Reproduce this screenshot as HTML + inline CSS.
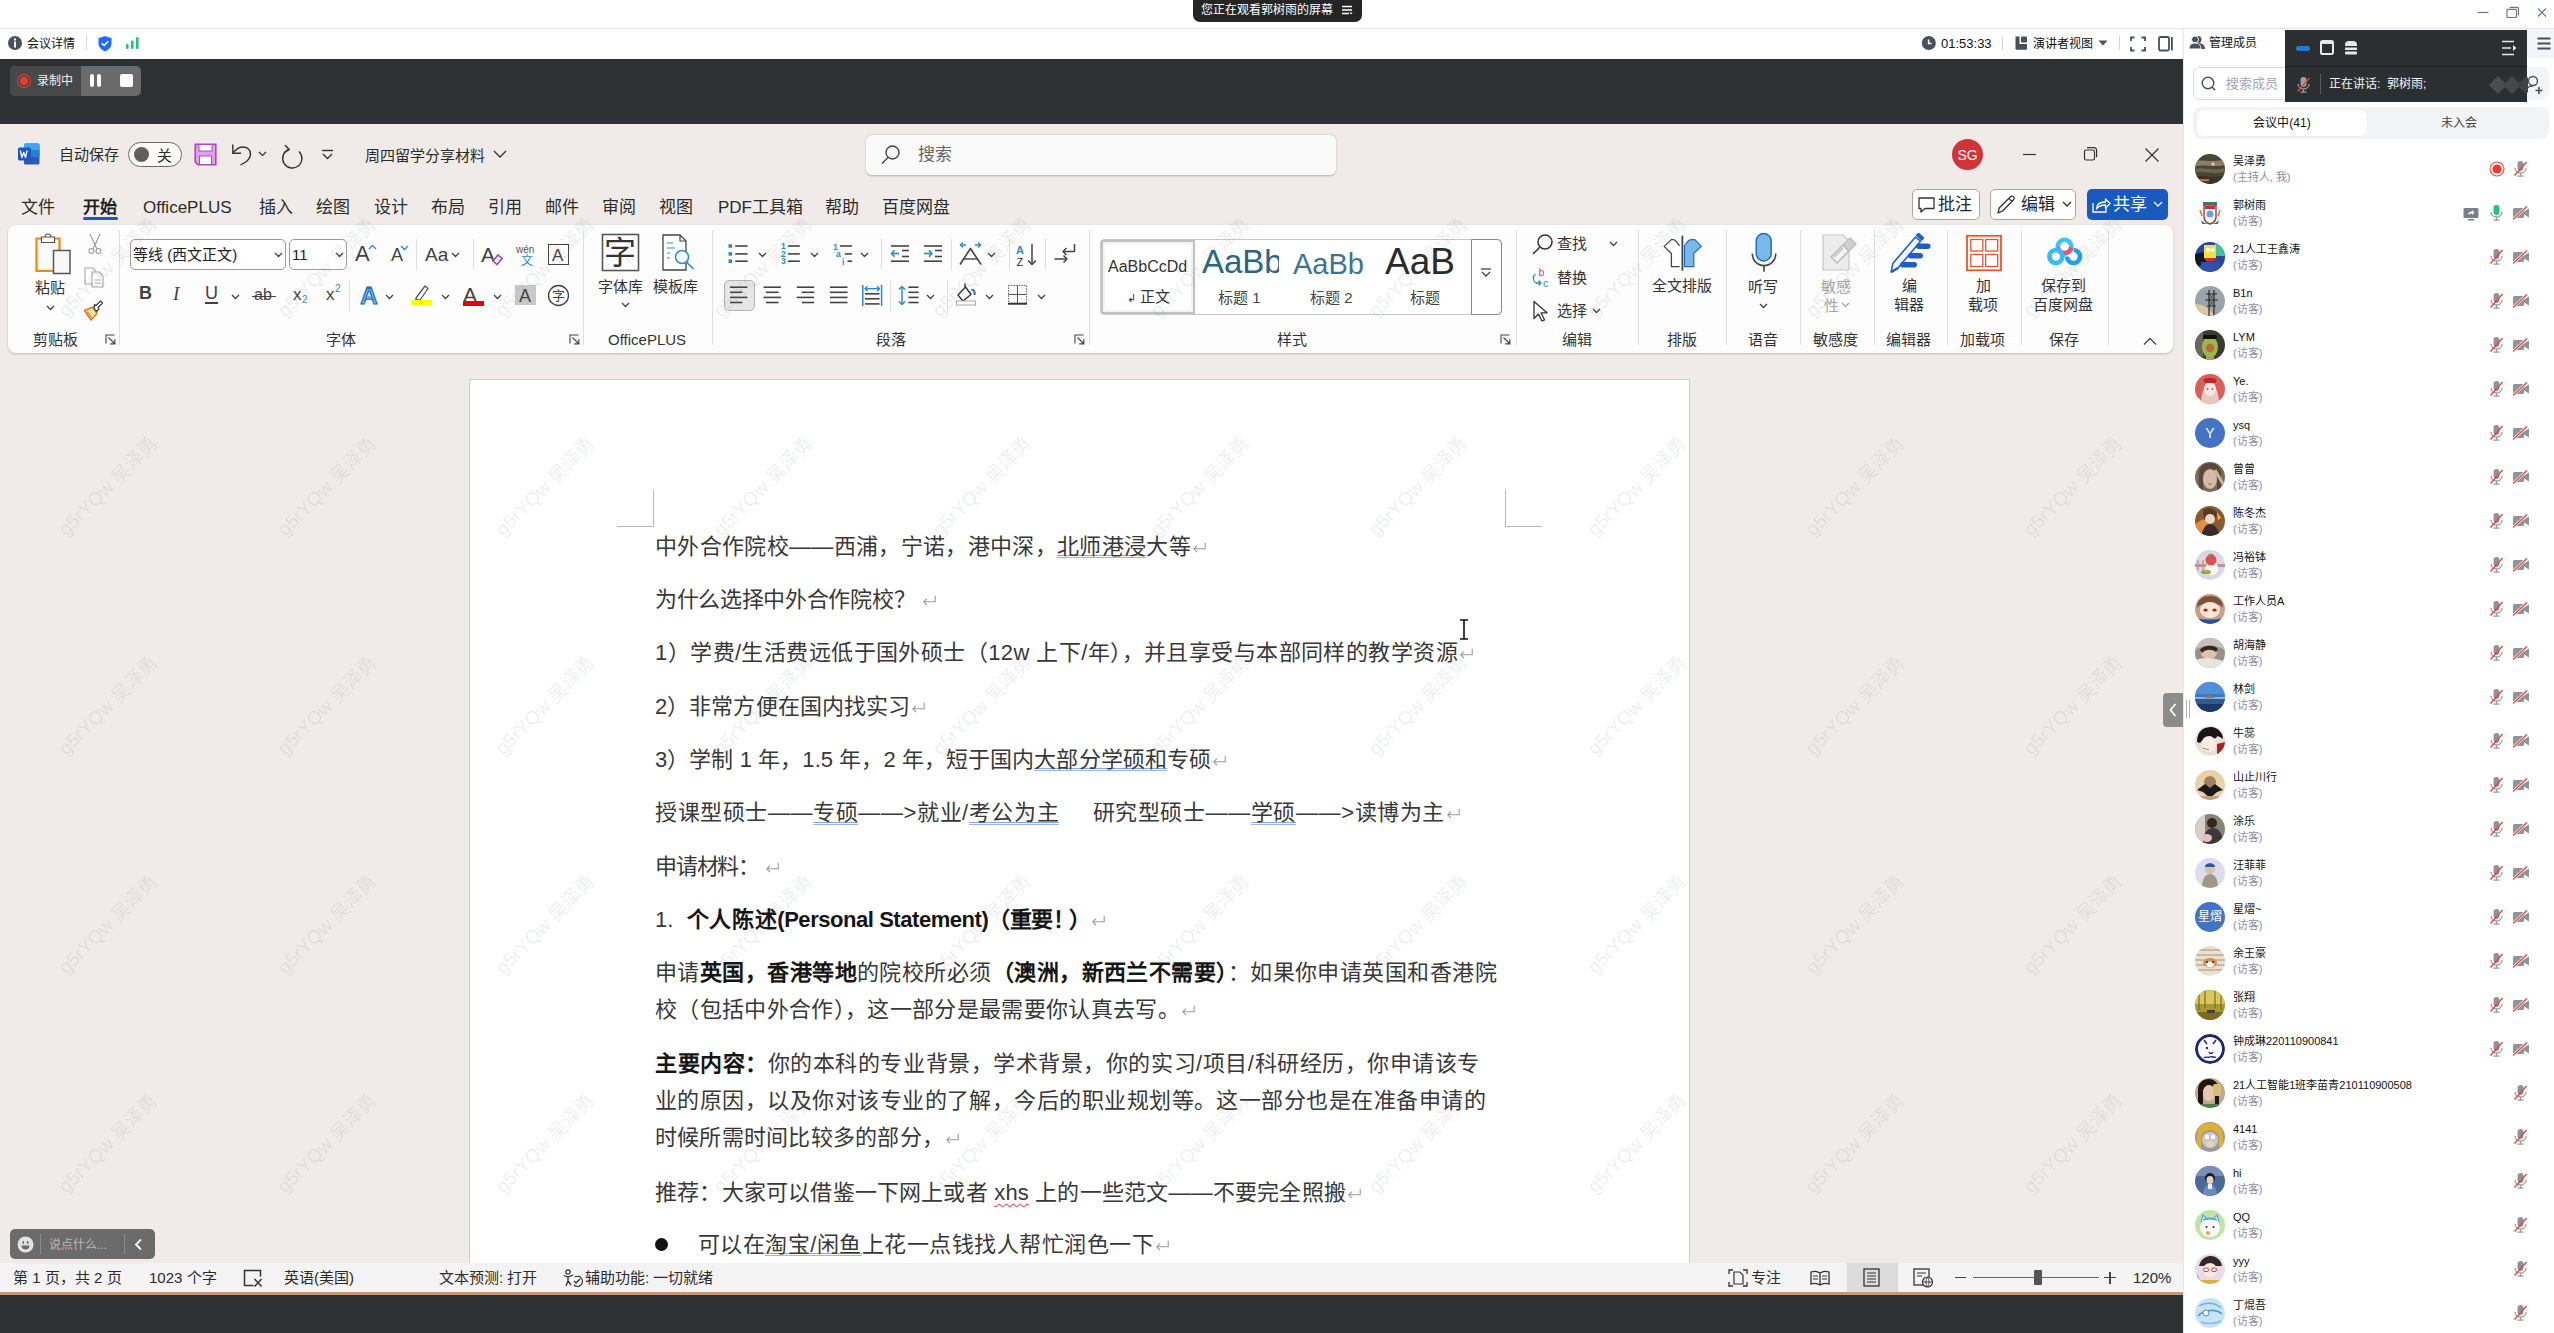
<!DOCTYPE html>
<html lang="zh-CN"><head><meta charset="utf-8">
<style>
*{box-sizing:border-box;margin:0;padding:0}
html,body{width:2554px;height:1333px;overflow:hidden;background:#fff;font-family:"Liberation Sans",sans-serif;color:#222;position:relative}
.a{position:absolute}
.t{position:absolute;white-space:nowrap;line-height:1}
svg{overflow:visible}
</style></head><body>

<div class="a" style="left:0;top:0;width:2554px;height:29px;background:#fff;border-bottom:1px solid #e4e6ee"></div>
<div class="a" style="left:0;top:59px;width:2183px;height:65px;background:#2e3134"></div>
<div class="a" style="left:0;top:124px;width:2183px;height:1168px;background:#f0ebe8"></div>
<div class="a" style="left:0;top:1292px;width:2183px;height:3px;background:#c5967a"></div>
<div class="a" style="left:0;top:1295px;width:2183px;height:38px;background:#2e3134"></div>
<div class="a" style="left:1193px;top:0;width:169px;height:22px;background:#252525;border-radius:0 0 7px 7px"></div>
<div class="t" style="left:1201px;top:4px;font-size:12px;color:#fff">您正在观看郭树雨的屏幕</div>
<svg class="a" style="left:1340px;top:3px" width="14" height="14" viewBox="0 0 14 14"><path d="M2 3.5h10M2 7h10M2 10.5h7" stroke="#fff" stroke-width="1.3"/><path d="M9.5 9.5h3l-1.5 2z" fill="#fff"/></svg>
<svg class="a" style="left:2470px;top:0" width="84" height="28" viewBox="0 0 84 28"><g stroke="#6e7385" stroke-width="1.2" fill="none"><path d="M7.5 12.5h11"/><rect x="37" y="9.3" width="9.5" height="8.2" rx="1"/><path d="M39.7 7.4h7.6a1.2 1.2 0 0 1 1.2 1.2v6.9"/><path d="M68 8.5l8 8M76 8.5l-8 8"/></g></svg>
<svg class="a" style="left:7px;top:35px" width="16" height="16" viewBox="0 0 16 16"><circle cx="8" cy="8" r="7" fill="#4a4f5c"/><rect x="7" y="6.5" width="2" height="6" fill="#fff"/><rect x="7" y="3.5" width="2" height="2" fill="#fff"/></svg>
<div class="t" style="left:27px;top:38px;font-size:12px;color:#111">会议详情</div>
<div class="a" style="left:86px;top:36px;width:1px;height:14px;background:#d6d8dd"></div>
<svg class="a" style="left:97px;top:35px" width="16" height="17" viewBox="0 0 16 17"><path d="M8 1l6.5 2.2v5.3c0 3.6-3 6.4-6.5 7.7C4.5 14.9 1.5 12.1 1.5 8.5V3.2z" fill="#1a6dff"/><path d="M4.8 8.3l2.3 2.2 4.2-4.2" stroke="#fff" stroke-width="1.6" fill="none"/></svg>
<svg class="a" style="left:125px;top:36px" width="16" height="14" viewBox="0 0 16 14"><rect x="1" y="8" width="2.6" height="5" rx="1.2" fill="#23c17c"/><rect x="6" y="4.5" width="2.6" height="8.5" rx="1.2" fill="#23c17c"/><rect x="11" y="1" width="2.6" height="12" rx="1.2" fill="#23c17c"/></svg>
<svg class="a" style="left:1921px;top:36px" width="16" height="16" viewBox="0 0 16 16"><circle cx="7.8" cy="7" r="7" fill="#4a4f5c"/><path d="M7.6 3.6v3.8h3" stroke="#fff" stroke-width="1.5" fill="none"/></svg>
<div class="t" style="left:1941px;top:37px;font-size:13px;color:#111">01:53:33</div>
<div class="a" style="left:2002px;top:36px;width:1px;height:14px;background:#d6d8dd"></div>
<svg class="a" style="left:2014px;top:36px" width="14" height="14" viewBox="0 0 14 14"><path d="M1.5 0.5h4v7.5h7.5v4.5a1.3 1.3 0 0 1-1.3 1.3H2.8a1.3 1.3 0 0 1-1.3-1.3z" fill="#4a4f5c"/><rect x="7" y="0.5" width="6" height="6" rx="1.2" fill="#4a4f5c"/></svg>
<div class="t" style="left:2033px;top:38px;font-size:12px;color:#111">演讲者视图</div>
<svg class="a" style="left:2098px;top:40px" width="10" height="6" viewBox="0 0 10 6"><path d="M0.5 0.5h9L5 5.5z" fill="#4a4f5c"/></svg>
<div class="a" style="left:2119px;top:36px;width:1px;height:14px;background:#d6d8dd"></div>
<svg class="a" style="left:2130px;top:36px" width="16" height="16" viewBox="0 0 16 16"><path d="M1 5V1.5h3.5M11.5 1.5H15V5M15 11v3.5h-3.5M4.5 14.5H1V11" stroke="#4a4f5c" stroke-width="1.8" fill="none"/></svg>
<svg class="a" style="left:2158px;top:36px" width="16" height="16" viewBox="0 0 16 16"><rect x="1" y="1" width="10" height="13.5" rx="1.5" stroke="#4a4f5c" stroke-width="1.8" fill="none"/><rect x="13" y="1" width="1.8" height="13.5" fill="#4a4f5c"/></svg>
<div class="a" style="left:10px;top:66px;width:131px;height:30px;border-radius:5px;overflow:hidden;background:#6a6a6a">
  <div class="a" style="left:0;top:0;width:71px;height:30px;background:#474848"></div>
  <svg class="a" style="left:6px;top:7px" width="16" height="16" viewBox="0 0 16 16"><circle cx="8" cy="8" r="6.6" stroke="#e23a32" stroke-width="1.1" fill="none"/><circle cx="8" cy="8" r="4.2" fill="#ea3b33"/></svg>
  <div class="t" style="left:27px;top:9px;font-size:12px;color:#f0f0f0">录制中</div>
  <div class="a" style="left:80px;top:8px;width:3.5px;height:12.5px;background:#fff;border-radius:2px"></div>
  <div class="a" style="left:87px;top:8px;width:3.5px;height:12.5px;background:#fff;border-radius:2px"></div>
  <div class="a" style="left:110px;top:8px;width:12.5px;height:12.5px;background:#fff;border-radius:2px"></div>
</div>

<svg class="a" style="left:17px;top:142px;" width="24" height="24" viewBox="0 0 24 24"><rect x="7" y="1.5" width="15.5" height="21" rx="1.5" fill="#2b5ab8"/><rect x="7" y="1.5" width="15.5" height="7" rx="1.5" fill="#41a5ee"/><rect x="7" y="8" width="15.5" height="7" fill="#2b7cd3"/><rect x="1" y="5.5" width="13" height="13" rx="1.5" fill="#185abd"/><path d="M3.3 8.5l1.6 7 1.8-5.2 1.8 5.2 1.6-7" stroke="#fff" stroke-width="1.3" fill="none" stroke-linejoin="round"/></svg>
<div class="t" style="left:59px;top:147.2px;font-size:15px;color:#2b2b2b;">自动保存</div>
<div class="a" style="left:128px;top:142px;width:54px;height:25px;border:1px solid #6b6b6b;border-radius:13px;background:#fbfaf9"></div>
<div class="a" style="left:134px;top:147px;width:15px;height:15px;border-radius:50%;background:#5f5f5f"></div>
<div class="t" style="left:157px;top:147.7px;font-size:15px;color:#2b2b2b;">关</div>
<svg class="a" style="left:194px;top:143px;" width="23" height="23" viewBox="0 0 23 23"><path d="M1.2 1.2h20.6v20.6H4.2l-3-3z" fill="#e39fe8" stroke="#b146c2" stroke-width="1.6"/><rect x="5" y="1.5" width="13" height="6.5" fill="#fff" stroke="#b146c2" stroke-width="1"/><rect x="5.5" y="13" width="12" height="8.5" fill="#fff" stroke="#b146c2" stroke-width="1"/></svg>
<svg class="a" style="left:231px;top:143px;" width="24" height="24" viewBox="0 0 24 24"><path d="M1.8 1.5v8.8h8.2" fill="none" stroke="#333" stroke-width="1.4"/><path d="M2.5 9.5C6 5 9 4 12 4c4 0 7.5 2.5 7.5 7 0 3.5-2 5.5-4 7.5L9.5 22" fill="none" stroke="#333" stroke-width="1.4"/></svg>
<svg class="a" style="left:258px;top:151px;" width="9" height="6" viewBox="0 0 9 6"><path d="M1 1l3.5 3.5L8 1" stroke="#333" stroke-width="1.2" fill="none"/></svg>
<svg class="a" style="left:279px;top:144px;" width="24" height="23" viewBox="0 0 24 23"><path d="M6 1.2l4.2 4.3-4.8 3.2" fill="none" stroke="#333" stroke-width="1.4"/><path d="M9.8 5.4A9.6 9.6 0 1 0 20 7.5" fill="none" stroke="#333" stroke-width="1.4"/></svg>
<svg class="a" style="left:321px;top:149px;" width="13" height="11" viewBox="0 0 13 11"><path d="M1 1.5h11" stroke="#333" stroke-width="1.4"/><path d="M2 5l4.5 4.5L11 5" stroke="#333" stroke-width="1.4" fill="none"/></svg>
<div class="t" style="left:365px;top:147.7px;font-size:15px;color:#2b2b2b;">周四留学分享材料</div>
<svg class="a" style="left:493px;top:150px;" width="14" height="9" viewBox="0 0 14 9"><path d="M1 1l6 6 6-6" stroke="#333" stroke-width="1.3" fill="none"/></svg>
<div class="a" style="left:866px;top:135px;width:470px;height:40px;background:#fafafa;border-radius:6px;box-shadow:0 0.6px 2px rgba(0,0,0,.25)"></div>
<svg class="a" style="left:880px;top:144px;" width="22" height="22" viewBox="0 0 22 22"><circle cx="12.5" cy="8.5" r="6.5" stroke="#444" stroke-width="1.4" fill="none"/><path d="M8 13.5l-6 6" stroke="#444" stroke-width="1.5"/></svg>
<div class="t" style="left:918px;top:146.2px;font-size:17px;color:#666;">搜索</div>
<div class="a" style="left:1952px;top:139px;width:31px;height:31px;border-radius:50%;background:#d13438"></div>
<div class="t" style="left:1952px;top:147.5px;width:31px;text-align:center;font-size:14px;color:#fff">SG</div>
<svg class="a" style="left:2016px;top:140px;" width="150" height="30" viewBox="0 0 150 30"><g stroke="#333" stroke-width="1.2" fill="none"><path d="M7 14.5h13"/><rect x="68.5" y="10" width="10" height="10" rx="1.8"/><path d="M71 7.6h7a2.6 2.6 0 0 1 2.6 2.6v7"/><path d="M129.5 8.5l13 13M142.5 8.5l-13 13"/></g></svg>
<div class="t" style="left:21px;top:198.7px;font-size:17px;color:#2b2b2b;">文件</div>
<div class="t" style="left:83px;top:198.7px;font-size:17px;color:#1f1f1f;font-weight:bold;">开始</div>
<div class="t" style="left:143px;top:198.7px;font-size:17px;color:#2b2b2b;">OfficePLUS</div>
<div class="t" style="left:259px;top:198.7px;font-size:17px;color:#2b2b2b;">插入</div>
<div class="t" style="left:316px;top:198.7px;font-size:17px;color:#2b2b2b;">绘图</div>
<div class="t" style="left:374px;top:198.7px;font-size:17px;color:#2b2b2b;">设计</div>
<div class="t" style="left:431px;top:198.7px;font-size:17px;color:#2b2b2b;">布局</div>
<div class="t" style="left:488px;top:198.7px;font-size:17px;color:#2b2b2b;">引用</div>
<div class="t" style="left:545px;top:198.7px;font-size:17px;color:#2b2b2b;">邮件</div>
<div class="t" style="left:602px;top:198.7px;font-size:17px;color:#2b2b2b;">审阅</div>
<div class="t" style="left:659px;top:198.7px;font-size:17px;color:#2b2b2b;">视图</div>
<div class="t" style="left:718px;top:198.7px;font-size:17px;color:#2b2b2b;">PDF工具箱</div>
<div class="t" style="left:825px;top:198.7px;font-size:17px;color:#2b2b2b;">帮助</div>
<div class="t" style="left:882px;top:198.7px;font-size:17px;color:#2b2b2b;">百度网盘</div>
<div class="a" style="left:83px;top:217px;width:35px;height:3px;background:#185abd;border-radius:1.5px"></div>
<div class="a" style="left:1912px;top:189px;width:68px;height:31px;background:#fff;border:1px solid #a9a6a4;border-radius:5px"></div>
<svg class="a" style="left:1917px;top:196px;" width="20" height="18" viewBox="0 0 20 18"><path d="M2 2h15v10.5H8l-4 3.5v-3.5H2z" fill="none" stroke="#333" stroke-width="1.3" stroke-linejoin="round"/></svg>
<div class="t" style="left:1938px;top:196.2px;font-size:17px;color:#262626;">批注</div>
<div class="a" style="left:1990px;top:189px;width:86px;height:31px;background:#fff;border:1px solid #a9a6a4;border-radius:5px"></div>
<svg class="a" style="left:1995px;top:194px;" width="22" height="22" viewBox="0 0 22 22"><path d="M3 19l1.2-5L15.5 2.7a2.2 2.2 0 0 1 3.1 3.1L7.3 17.2z M13.8 4.4l3 3" fill="none" stroke="#333" stroke-width="1.3" stroke-linejoin="round"/></svg>
<div class="t" style="left:2021px;top:196.2px;font-size:17px;color:#262626;">编辑</div>
<svg class="a" style="left:2062px;top:201px;" width="10" height="7" viewBox="0 0 10 7"><path d="M1 1l4 4 4-4" stroke="#333" stroke-width="1.3" fill="none"/></svg>
<div class="a" style="left:2087px;top:189px;width:81px;height:31px;background:#185abd;border-radius:5px"></div>
<svg class="a" style="left:2091px;top:196px;" width="20" height="18" viewBox="0 0 20 18"><path d="M2 7v9h13v-4" fill="none" stroke="#fff" stroke-width="1.3"/><path d="M5.5 13c0-5 3-7 9-7V3l4.5 4.5-4.5 4.5V9c-4 0-7 1-9 4z" fill="none" stroke="#fff" stroke-width="1.3" stroke-linejoin="round"/></svg>
<div class="t" style="left:2113px;top:196.2px;font-size:17px;color:#fff;">共享</div>
<svg class="a" style="left:2153px;top:201px;" width="10" height="7" viewBox="0 0 10 7"><path d="M1 1l4 4 4-4" stroke="#fff" stroke-width="1.3" fill="none"/></svg>
<div class="a" style="left:8px;top:225px;width:2165px;height:128px;background:#fdfdfd;border-radius:8px;box-shadow:0 1px 2.5px rgba(0,0,0,.22)"></div>
<div class="a" style="left:119px;top:230px;width:1px;height:115px;background:#e1dfdd"></div>
<div class="a" style="left:583px;top:230px;width:1px;height:115px;background:#e1dfdd"></div>
<div class="a" style="left:712px;top:230px;width:1px;height:115px;background:#e1dfdd"></div>
<div class="a" style="left:1089px;top:230px;width:1px;height:115px;background:#e1dfdd"></div>
<div class="a" style="left:1516px;top:230px;width:1px;height:115px;background:#e1dfdd"></div>
<div class="a" style="left:1638px;top:230px;width:1px;height:115px;background:#e1dfdd"></div>
<div class="a" style="left:1726px;top:230px;width:1px;height:115px;background:#e1dfdd"></div>
<div class="a" style="left:1800px;top:230px;width:1px;height:115px;background:#e1dfdd"></div>
<div class="a" style="left:1874px;top:230px;width:1px;height:115px;background:#e1dfdd"></div>
<div class="a" style="left:1947px;top:230px;width:1px;height:115px;background:#e1dfdd"></div>
<div class="a" style="left:2021px;top:230px;width:1px;height:115px;background:#e1dfdd"></div>
<div class="a" style="left:2108px;top:230px;width:1px;height:115px;background:#e1dfdd"></div>
<div class="t" style="left:33px;top:331.6px;font-size:15px;color:#333;">剪贴板</div>
<div class="t" style="left:326px;top:331.6px;font-size:15px;color:#333;">字体</div>
<div class="t" style="left:608px;top:331.6px;font-size:15px;color:#333;">OfficePLUS</div>
<div class="t" style="left:876px;top:331.6px;font-size:15px;color:#333;">段落</div>
<div class="t" style="left:1277px;top:331.6px;font-size:15px;color:#333;">样式</div>
<div class="t" style="left:1562px;top:331.6px;font-size:15px;color:#333;">编辑</div>
<div class="t" style="left:1667px;top:331.6px;font-size:15px;color:#333;">排版</div>
<div class="t" style="left:1748px;top:331.6px;font-size:15px;color:#333;">语音</div>
<div class="t" style="left:1813px;top:331.6px;font-size:15px;color:#333;">敏感度</div>
<div class="t" style="left:1886px;top:331.6px;font-size:15px;color:#333;">编辑器</div>
<div class="t" style="left:1960px;top:331.6px;font-size:15px;color:#333;">加载项</div>
<div class="t" style="left:2049px;top:331.6px;font-size:15px;color:#333;">保存</div>
<svg class="a" style="left:105px;top:334px;" width="11" height="11" viewBox="0 0 11 11"><path d="M1 9.5V1h8.5" stroke="#444" stroke-width="1.1" fill="none"/><path d="M3.5 3.5l6 6M9.8 5.2v4.6H5.2" stroke="#444" stroke-width="1.2" fill="none"/></svg>
<svg class="a" style="left:569px;top:334px;" width="11" height="11" viewBox="0 0 11 11"><path d="M1 9.5V1h8.5" stroke="#444" stroke-width="1.1" fill="none"/><path d="M3.5 3.5l6 6M9.8 5.2v4.6H5.2" stroke="#444" stroke-width="1.2" fill="none"/></svg>
<svg class="a" style="left:1074px;top:334px;" width="11" height="11" viewBox="0 0 11 11"><path d="M1 9.5V1h8.5" stroke="#444" stroke-width="1.1" fill="none"/><path d="M3.5 3.5l6 6M9.8 5.2v4.6H5.2" stroke="#444" stroke-width="1.2" fill="none"/></svg>
<svg class="a" style="left:1500px;top:334px;" width="11" height="11" viewBox="0 0 11 11"><path d="M1 9.5V1h8.5" stroke="#444" stroke-width="1.1" fill="none"/><path d="M3.5 3.5l6 6M9.8 5.2v4.6H5.2" stroke="#444" stroke-width="1.2" fill="none"/></svg>
<svg class="a" style="left:2143px;top:337px;" width="14" height="9" viewBox="0 0 14 9"><path d="M1 7.5l6-6 6 6" stroke="#444" stroke-width="1.3" fill="none"/></svg>
<svg class="a" style="left:33px;top:233px;" width="42" height="44" viewBox="0 0 42 44"><path d="M3.5 5.5h23v32.5h-23z" fill="#fff3d0" stroke="#e8891a" stroke-width="2.2"/><path d="M6.5 8.5h17v26.5h-17z" fill="#fbfbfb"/><path d="M8.5 4h13v5.5h-13z" fill="#fff" stroke="#555" stroke-width="1.2"/><path d="M12 4a3 3 0 0 1 6 0" fill="none" stroke="#555" stroke-width="1.2"/><rect x="20.5" y="17.5" width="16.5" height="23" fill="#f8f8f8" stroke="#555" stroke-width="1.5"/></svg>
<div class="t" style="left:34.5px;top:279.6px;font-size:15px;color:#333;">粘贴</div>
<svg class="a" style="left:46px;top:305px;" width="9" height="6" viewBox="0 0 9 6"><path d="M1 1l3.5 3.5L8 1" stroke="#424242" stroke-width="1.3" fill="none"/></svg>
<svg class="a" style="left:86px;top:233px;" width="18" height="22" viewBox="0 0 18 22"><path d="M4 1l7 15M14 1L7 16" stroke="#9a9a9a" stroke-width="1.1" fill="none"/><circle cx="5.5" cy="18" r="2.5" fill="none" stroke="#9a9a9a" stroke-width="1.1"/><circle cx="12.5" cy="18" r="2.5" fill="none" stroke="#9a9a9a" stroke-width="1.1"/></svg>
<svg class="a" style="left:83px;top:266px;" width="22" height="22" viewBox="0 0 22 22"><path d="M2 2h8l2 2v14H2z" fill="#fff" stroke="#a8a8a8" stroke-width="1.1"/><path d="M9 6h7l4 4v11H9z" fill="#fff" stroke="#a8a8a8" stroke-width="1.1"/><path d="M11.5 14h6M11.5 17h6" stroke="#a8a8a8"/></svg>
<svg class="a" style="left:83px;top:299px;" width="22" height="22" viewBox="0 0 22 22"><path d="M1.5 11.5l8.5-3.5 4 6.5-6 6.5z" fill="#ffe4a8" stroke="#e07b18" stroke-width="1.5" stroke-linejoin="round"/><path d="M4 12.5l4.5 6" stroke="#e07b18" stroke-width="1.2"/><path d="M11 9.5l2.5 3 2.5-2.5-1-1.5 4.5-4.5-2-2-4.5 4.5-1.5-1z" fill="#fff" stroke="#444" stroke-width="1.3" stroke-linejoin="round"/></svg>
<div class="a" style="left:130px;top:239px;width:156px;height:31px;border:1px solid #9c9c9c;border-radius:5px;background:#fff"></div>
<div class="t" style="left:133px;top:247.2px;font-size:15px;color:#222;">等线 (西文正文)</div>
<svg class="a" style="left:274px;top:252px;" width="9" height="6" viewBox="0 0 9 6"><path d="M1 1l3.5 3.5L8 1" stroke="#424242" stroke-width="1.3" fill="none"/></svg>
<div class="a" style="left:289px;top:239px;width:58px;height:31px;border:1px solid #9c9c9c;border-radius:5px;background:#fff"></div>
<div class="t" style="left:292px;top:247.2px;font-size:15px;color:#222;">11</div>
<svg class="a" style="left:335px;top:252px;" width="9" height="6" viewBox="0 0 9 6"><path d="M1 1l3.5 3.5L8 1" stroke="#424242" stroke-width="1.3" fill="none"/></svg>
<div class="t" style="left:355px;top:243px;font-size:22px;color:#424242;font-family:'Liberation Sans'">A</div>
<svg class="a" style="left:368px;top:244px;" width="9" height="6" viewBox="0 0 9 6"><path d="M1 5l3.5-3.5L8 5" stroke="#2a8ad4" stroke-width="1.4" fill="none"/></svg>
<div class="t" style="left:391px;top:246px;font-size:18px;color:#424242">A</div>
<svg class="a" style="left:400px;top:245px;" width="9" height="6" viewBox="0 0 9 6"><path d="M1 1l3.5 3.5L8 1" stroke="#2a8ad4" stroke-width="1.4" fill="none"/></svg>
<div class="a" style="left:416px;top:239px;width:1px;height:31px;background:#e1dfdd"></div>
<div class="t" style="left:425px;top:245px;font-size:19px;color:#424242">Aa</div>
<svg class="a" style="left:451px;top:252px;" width="9" height="6" viewBox="0 0 9 6"><path d="M1 1l3.5 3.5L8 1" stroke="#424242" stroke-width="1.3" fill="none"/></svg>
<div class="a" style="left:473px;top:239px;width:1px;height:31px;background:#e1dfdd"></div>
<div class="t" style="left:481px;top:244px;font-size:21px;color:#424242">A</div>
<svg class="a" style="left:491px;top:253px;" width="13" height="12" viewBox="0 0 13 12"><path d="M2 8l5-6 4 3.5-5 6z" fill="#fff" stroke="#a040c0" stroke-width="1.6"/></svg>
<div class="t" style="left:516px;top:245px;font-size:10px;color:#555">wén</div>
<div class="t" style="left:521px;top:255.1px;font-size:12px;color:#2a8ad4;">文</div>
<div class="a" style="left:548px;top:244px;width:21px;height:21px;border:1.6px solid #444"></div>
<div class="t" style="left:552px;top:247px;font-size:17px;color:#424242">A</div>
<div class="t" style="left:139px;top:284px;font-size:18px;font-weight:bold;color:#424242">B</div>
<div class="t" style="left:173px;top:284px;font-size:19px;font-style:italic;font-family:'Liberation Serif';color:#424242">I</div>
<div class="t" style="left:205px;top:284px;font-size:18px;color:#424242">U</div>
<div class="a" style="left:205px;top:302px;width:13px;height:1.5px;background:#424242"></div>
<svg class="a" style="left:231px;top:294px;" width="9" height="6" viewBox="0 0 9 6"><path d="M1 1l3.5 3.5L8 1" stroke="#424242" stroke-width="1.3" fill="none"/></svg>
<div class="t" style="left:254px;top:287px;font-size:16px;color:#424242">ab</div>
<div class="a" style="left:252px;top:296px;width:24px;height:1.3px;background:#424242"></div>
<div class="t" style="left:293px;top:286px;font-size:17px;color:#424242">x</div><div class="t" style="left:302px;top:295px;font-size:10px;color:#2a8ad4">2</div>
<div class="t" style="left:326px;top:286px;font-size:17px;color:#424242">x</div><div class="t" style="left:335px;top:284px;font-size:10px;color:#2a8ad4">2</div>
<div class="a" style="left:349px;top:280px;width:1px;height:31px;background:#e1dfdd"></div>
<svg class="a" style="left:357px;top:283px;" width="24" height="24" viewBox="0 0 24 24"><text x="12" y="21" text-anchor="middle" font-family="Liberation Sans" font-weight="bold" font-size="24" fill="#2b7fd0" stroke="#1a5fb0" stroke-width="1">A</text><text x="12" y="21" text-anchor="middle" font-family="Liberation Sans" font-weight="bold" font-size="24" fill="none" stroke="#bfe0ff" stroke-width="0.8" transform="translate(12 12) scale(0.78) translate(-12 -10.5)">A</text></svg>
<svg class="a" style="left:385px;top:294px;" width="9" height="6" viewBox="0 0 9 6"><path d="M1 1l3.5 3.5L8 1" stroke="#424242" stroke-width="1.3" fill="none"/></svg>
<svg class="a" style="left:410px;top:283px;" width="24" height="24" viewBox="0 0 24 24"><path d="M6 15l9-12 3 2.5-8 11.5-3 0z" fill="#fff" stroke="#555" stroke-width="1.3" stroke-linejoin="round"/><path d="M6 15l-2 3h4z" fill="#666"/><rect x="1" y="17" width="21" height="5" fill="#ffff00"/></svg>
<svg class="a" style="left:441px;top:294px;" width="9" height="6" viewBox="0 0 9 6"><path d="M1 1l3.5 3.5L8 1" stroke="#424242" stroke-width="1.3" fill="none"/></svg>
<div class="t" style="left:463px;top:284px;font-size:21px;color:#424242">A</div>
<div class="a" style="left:463px;top:301px;width:21px;height:5px;background:#e00"></div>
<svg class="a" style="left:493px;top:294px;" width="9" height="6" viewBox="0 0 9 6"><path d="M1 1l3.5 3.5L8 1" stroke="#424242" stroke-width="1.3" fill="none"/></svg>
<div class="a" style="left:515px;top:285px;width:21px;height:20px;background:#c8c8c8"></div>
<div class="t" style="left:519px;top:287px;font-size:18px;color:#424242">A</div>
<svg class="a" style="left:547px;top:284px;" width="23" height="23" viewBox="0 0 23 23"><circle cx="11.5" cy="11.5" r="10" fill="none" stroke="#444" stroke-width="1.3"/></svg>
<div class="t" style="left:552px;top:289.1px;font-size:13px;color:#444;">字</div>
<svg class="a" style="left:601px;top:233px;" width="39" height="40" viewBox="0 0 39 40"><rect x="1.5" y="1.5" width="36" height="36" fill="#fff" stroke="#555" stroke-width="1.6"/><path d="M2 2l35 35M37 2L2 37" stroke="#bbb" stroke-width="0.6" stroke-dasharray="2 2"/></svg>
<div class="t" style="left:604px;top:237px;font-size:32px;font-family:'Liberation Serif';color:#333">字</div>
<div class="t" style="left:598px;top:278.6px;font-size:15px;color:#333;">字体库</div>
<svg class="a" style="left:621px;top:302px;" width="9" height="6" viewBox="0 0 9 6"><path d="M1 1l3.5 3.5L8 1" stroke="#424242" stroke-width="1.3" fill="none"/></svg>
<svg class="a" style="left:660px;top:234px;" width="40" height="40" viewBox="0 0 40 40"><path d="M3 1h17l6 6v29H3z" fill="#fff" stroke="#444" stroke-width="1.3"/><path d="M20 1v6h6" fill="none" stroke="#444" stroke-width="1.2"/><path d="M7 9h6M7 14h8M7 19h3M7 24h3" stroke="#2a8ad4" stroke-width="1.2"/><circle cx="22" cy="23" r="6.5" fill="#fff" stroke="#2a8ad4" stroke-width="1.5"/><path d="M26.5 28l7 7" stroke="#2a8ad4" stroke-width="1.6"/></svg>
<div class="t" style="left:653px;top:278.6px;font-size:15px;color:#333;">模板库</div>
<svg class="a" style="left:715px;top:235px;" width="375" height="80" viewBox="0 0 375 80"><rect x="13.5" y="9.199999999999989" width="3.6" height="3.6" fill="#2a8ad4"/><path d="M20.200000000000045 11L32.60000000000002 11" stroke="#444" stroke-width="1.6" fill="none"/><rect x="13.5" y="17.099999999999994" width="3.6" height="3.6" fill="#2a8ad4"/><path d="M20.200000000000045 18.900000000000006L32.60000000000002 18.900000000000006" stroke="#444" stroke-width="1.6" fill="none"/><rect x="13.5" y="24.399999999999977" width="3.6" height="3.6" fill="#2a8ad4"/><path d="M20.200000000000045 26.19999999999999L32.60000000000002 26.19999999999999" stroke="#444" stroke-width="1.6" fill="none"/><text x="66" y="14.199999999999989" font-size="8.5" font-weight="bold" fill="#2a8ad4" font-family="Liberation Sans">1</text><path d="M73 11L84.79999999999995 11" stroke="#444" stroke-width="1.6" fill="none"/><text x="66" y="22.100000000000023" font-size="8.5" font-weight="bold" fill="#2a8ad4" font-family="Liberation Sans">2</text><path d="M73 18.900000000000006L84.79999999999995 18.900000000000006" stroke="#444" stroke-width="1.6" fill="none"/><text x="66" y="29.399999999999977" font-size="8.5" font-weight="bold" fill="#2a8ad4" font-family="Liberation Sans">3</text><path d="M73 26.19999999999999L84.79999999999995 26.19999999999999" stroke="#444" stroke-width="1.6" fill="none"/><text x="118" y="14.5" font-size="8.5" font-weight="bold" fill="#2a8ad4" font-family="Liberation Sans">1</text><text x="121" y="22" font-size="8.5" font-weight="bold" fill="#2a8ad4" font-family="Liberation Sans">a</text><text x="127" y="29.5" font-size="8.5" font-weight="bold" fill="#2a8ad4" font-family="Liberation Sans">i</text><path d="M125 11L137 11" stroke="#444" stroke-width="1.6" fill="none"/><path d="M130 18.900000000000006L137 18.900000000000006" stroke="#444" stroke-width="1.6" fill="none"/><path d="M132.5 26.19999999999999L137 26.19999999999999" stroke="#444" stroke-width="1.6" fill="none"/><path d="M176 11L194 11" stroke="#444" stroke-width="1.6" fill="none"/><path d="M176 26.19999999999999L194 26.19999999999999" stroke="#444" stroke-width="1.6" fill="none"/><path d="M187 15.5L194 15.5" stroke="#444" stroke-width="1.6" fill="none"/><path d="M187 21.5L194 21.5" stroke="#444" stroke-width="1.6" fill="none"/><path d="M176.5 18.5L184 18.5" stroke="#2a8ad4" stroke-width="1.7" fill="none"/><path d="M179.5 15.300000000000011L176.60000000000002 18.5L179.5 21.69999999999999" stroke="#2a8ad4" stroke-width="1.7" fill="none" stroke-linejoin="round"/><path d="M209 11L227 11" stroke="#444" stroke-width="1.6" fill="none"/><path d="M209 26.19999999999999L227 26.19999999999999" stroke="#444" stroke-width="1.6" fill="none"/><path d="M220 15.5L227 15.5" stroke="#444" stroke-width="1.6" fill="none"/><path d="M220 21.5L227 21.5" stroke="#444" stroke-width="1.6" fill="none"/><path d="M209 18.5L217 18.5" stroke="#2a8ad4" stroke-width="1.7" fill="none"/><path d="M214 15.300000000000011L216.89999999999998 18.5L214 21.69999999999999" stroke="#2a8ad4" stroke-width="1.7" fill="none" stroke-linejoin="round"/><path d="M245 29.5L255.5 13.5L266 29.5" stroke="#444" stroke-width="1.6" fill="none" stroke-linejoin="round"/><path d="M249 24L262 24" stroke="#444" stroke-width="1.4" fill="none"/><path d="M245.5 10L251 10" stroke="#2a8ad4" stroke-width="1.5" fill="none"/><path d="M248 7.5L245.5 10L248 12.5" stroke="#2a8ad4" stroke-width="1.5" fill="none" stroke-linejoin="round"/><path d="M260 10L265.5 10" stroke="#2a8ad4" stroke-width="1.5" fill="none"/><path d="M263 7.5L265.5 10L263 12.5" stroke="#2a8ad4" stroke-width="1.5" fill="none" stroke-linejoin="round"/><text x="301" y="18.5" font-size="11" font-weight="bold" fill="#2a8ad4" font-family="Liberation Sans">A</text><text x="301.5" y="30.5" font-size="11" fill="#333" font-family="Liberation Sans">Z</text><path d="M317 9L317 29.5" stroke="#444" stroke-width="1.5" fill="none"/><path d="M313 25.5L317 29.5L321 25.5" stroke="#444" stroke-width="1.5" fill="none" stroke-linejoin="round"/><path d="M359.5 9V16.5H348" stroke="#444" stroke-width="1.5" fill="none" stroke-linejoin="round"/><path d="M351.5 13L348 16.5L351.5 20" stroke="#444" stroke-width="1.5" fill="none" stroke-linejoin="round"/><path d="M339.5 24L352 24" stroke="#444" stroke-width="1.5" fill="none"/><path d="M348.5 20.5L352 24L348.5 27.5" stroke="#444" stroke-width="1.5" fill="none" stroke-linejoin="round"/><path d="M15 52.19999999999999L32.39999999999998 52.19999999999999" stroke="#444" stroke-width="1.6" fill="none"/><path d="M15 57.30000000000001L27.299999999999955 57.30000000000001" stroke="#444" stroke-width="1.6" fill="none"/><path d="M15 62.39999999999998L32.39999999999998 62.39999999999998" stroke="#444" stroke-width="1.6" fill="none"/><path d="M15 67.5L27.299999999999955 67.5" stroke="#444" stroke-width="1.6" fill="none"/><path d="M48.5 52.19999999999999L65.89999999999998 52.19999999999999" stroke="#444" stroke-width="1.6" fill="none"/><path d="M51 57.30000000000001L63.5 57.30000000000001" stroke="#444" stroke-width="1.6" fill="none"/><path d="M48.5 62.39999999999998L65.89999999999998 62.39999999999998" stroke="#444" stroke-width="1.6" fill="none"/><path d="M51 67.5L63.5 67.5" stroke="#444" stroke-width="1.6" fill="none"/><path d="M81.79999999999995 52.19999999999999L99.20000000000005 52.19999999999999" stroke="#444" stroke-width="1.6" fill="none"/><path d="M86.79999999999995 57.30000000000001L99.20000000000005 57.30000000000001" stroke="#444" stroke-width="1.6" fill="none"/><path d="M81.79999999999995 62.39999999999998L99.20000000000005 62.39999999999998" stroke="#444" stroke-width="1.6" fill="none"/><path d="M86.79999999999995 67.5L99.20000000000005 67.5" stroke="#444" stroke-width="1.6" fill="none"/><path d="M115 52.19999999999999L132.5 52.19999999999999" stroke="#444" stroke-width="1.6" fill="none"/><path d="M115 57.30000000000001L132.5 57.30000000000001" stroke="#444" stroke-width="1.6" fill="none"/><path d="M115 62.39999999999998L132.5 62.39999999999998" stroke="#444" stroke-width="1.6" fill="none"/><path d="M115 67.5L132.5 67.5" stroke="#444" stroke-width="1.6" fill="none"/><path d="M147.79999999999995 50L147.79999999999995 71" stroke="#2a8ad4" stroke-width="1.5" fill="none"/><path d="M166.60000000000002 50L166.60000000000002 71" stroke="#2a8ad4" stroke-width="1.5" fill="none"/><path d="M150 53.69999999999999L164.5 53.69999999999999" stroke="#2a8ad4" stroke-width="1.4" fill="none"/><path d="M152.5 51.19999999999999L150 53.69999999999999L152.5 56.19999999999999M162 51.19999999999999L164.5 53.69999999999999L162 56.19999999999999" stroke="#2a8ad4" stroke-width="1.4" fill="none" stroke-linejoin="round"/><path d="M150 58.80000000000001L164.5 58.80000000000001" stroke="#444" stroke-width="1.6" fill="none"/><path d="M150 63.80000000000001L164.5 63.80000000000001" stroke="#444" stroke-width="1.6" fill="none"/><path d="M150 68.89999999999998L164.5 68.89999999999998" stroke="#444" stroke-width="1.6" fill="none"/><path d="M187 51.5L187 69.5" stroke="#2a8ad4" stroke-width="1.5" fill="none"/><path d="M184 54.5L187 51.5L190 54.5M184 66.5L187 69.5L190 66.5" stroke="#2a8ad4" stroke-width="1.5" fill="none" stroke-linejoin="round"/><path d="M193.39999999999998 52.19999999999999L203.60000000000002 52.19999999999999" stroke="#444" stroke-width="1.6" fill="none"/><path d="M193.39999999999998 57.30000000000001L203.60000000000002 57.30000000000001" stroke="#444" stroke-width="1.6" fill="none"/><path d="M193.39999999999998 62.39999999999998L203.60000000000002 62.39999999999998" stroke="#444" stroke-width="1.6" fill="none"/><path d="M193.39999999999998 67.5L203.60000000000002 67.5" stroke="#444" stroke-width="1.6" fill="none"/><path d="M243 60L250.5 52L256 59.5L248 66Z" stroke="#333" stroke-width="1.4" fill="#fff" stroke-linejoin="round"/><path d="M250 52.5V48.5" stroke="#333" stroke-width="1.4" fill="none" stroke-linejoin="round"/><path d="M256.5 55C259 54 260 57 259.5 60" stroke="#2a6fb8" stroke-width="2" fill="none" stroke-linejoin="round"/><rect x="241.5" y="66" width="19" height="4" fill="#fff" stroke="#aaa" stroke-width="1"/><rect x="293.5" y="50.5" width="18" height="17.5" fill="none" stroke="#555" stroke-width="1" stroke-dasharray="1.3 1.3"/><path d="M302.5 50.5L302.5 68" stroke="#555" stroke-width="1" fill="none"/><path d="M293.5 59.5L311.5 59.5" stroke="#555" stroke-width="1" fill="none"/><path d="M293 68.80000000000001L312 68.80000000000001" stroke="#333" stroke-width="1.8" fill="none"/></svg>
<svg class="a" style="left:758px;top:252px;" width="9" height="6" viewBox="0 0 9 6"><path d="M1 1l3.5 3.5L8 1" stroke="#424242" stroke-width="1.3" fill="none"/></svg>
<svg class="a" style="left:810px;top:252px;" width="9" height="6" viewBox="0 0 9 6"><path d="M1 1l3.5 3.5L8 1" stroke="#424242" stroke-width="1.3" fill="none"/></svg>
<svg class="a" style="left:860px;top:252px;" width="9" height="6" viewBox="0 0 9 6"><path d="M1 1l3.5 3.5L8 1" stroke="#424242" stroke-width="1.3" fill="none"/></svg>
<svg class="a" style="left:987px;top:252px;" width="9" height="6" viewBox="0 0 9 6"><path d="M1 1l3.5 3.5L8 1" stroke="#424242" stroke-width="1.3" fill="none"/></svg>
<svg class="a" style="left:926px;top:294px;" width="9" height="6" viewBox="0 0 9 6"><path d="M1 1l3.5 3.5L8 1" stroke="#424242" stroke-width="1.3" fill="none"/></svg>
<svg class="a" style="left:985px;top:294px;" width="9" height="6" viewBox="0 0 9 6"><path d="M1 1l3.5 3.5L8 1" stroke="#424242" stroke-width="1.3" fill="none"/></svg>
<svg class="a" style="left:1037px;top:294px;" width="9" height="6" viewBox="0 0 9 6"><path d="M1 1l3.5 3.5L8 1" stroke="#424242" stroke-width="1.3" fill="none"/></svg>
<div class="a" style="left:881px;top:239px;width:1px;height:31px;background:#e1dfdd"></div>
<div class="a" style="left:951px;top:239px;width:1px;height:31px;background:#e1dfdd"></div>
<div class="a" style="left:1009px;top:239px;width:1px;height:31px;background:#e1dfdd"></div>
<div class="a" style="left:1045px;top:239px;width:1px;height:31px;background:#e1dfdd"></div>
<div class="a" style="left:890px;top:280px;width:1px;height:31px;background:#e1dfdd"></div>
<div class="a" style="left:947px;top:280px;width:1px;height:31px;background:#e1dfdd"></div>
<div class="a" style="left:724px;top:280px;width:31px;height:31px;background:#e6e6e6;border:1px solid #b3b3b3;border-radius:5px"></div>
<svg class="a" style="left:715px;top:235px;" width="375" height="80" viewBox="0 0 375 80"><path d="M15 52.19999999999999L32.39999999999998 52.19999999999999" stroke="#444" stroke-width="1.6" fill="none"/><path d="M15 57.30000000000001L27.299999999999955 57.30000000000001" stroke="#444" stroke-width="1.6" fill="none"/><path d="M15 62.39999999999998L32.39999999999998 62.39999999999998" stroke="#444" stroke-width="1.6" fill="none"/><path d="M15 67.5L27.299999999999955 67.5" stroke="#444" stroke-width="1.6" fill="none"/></svg>
<div class="a" style="left:1100px;top:239px;width:402px;height:76px;border:1px solid #c8c8c8;border-radius:4px;background:#fff"></div>
<div class="a" style="left:1101px;top:240px;width:94px;height:74px;border:2px solid #c2c2c2;background:#fff;box-shadow:inset 0 0 0 2px #f3f3f3"></div>
<div class="t" style="left:1108px;top:259px;font-size:16px;color:#333;width:80px;overflow:hidden">AaBbCcDd</div>
<div class="t" style="left:1127px;top:289.1px;font-size:15px;color:#333;"><span style="font-size:11px">↲</span> 正文</div>
<div class="t" style="left:1202px;top:245px;font-size:33px;color:#2a6585;width:77px;overflow:hidden">AaBbC</div>
<div class="t" style="left:1218px;top:289.6px;font-size:15px;color:#444;">标题 1</div>
<div class="t" style="left:1293px;top:250px;font-size:29px;color:#3a7595;width:77px;overflow:hidden">AaBb</div>
<div class="t" style="left:1310px;top:289.6px;font-size:15px;color:#444;">标题 2</div>
<div class="t" style="left:1385px;top:243px;font-size:37px;color:#2a2a2a;width:80px;overflow:hidden">AaB</div>
<div class="t" style="left:1410px;top:289.6px;font-size:15px;color:#444;">标题</div>
<div class="a" style="left:1471px;top:239px;width:31px;height:76px;border:1px solid #8a8a8a;background:#fff;border-radius:0 5px 5px 0"></div>
<svg class="a" style="left:1480px;top:268px;" width="12" height="10" viewBox="0 0 12 10"><path d="M1 1h10" stroke="#444" stroke-width="1.3"/><path d="M2 4l4 4 4-4" stroke="#444" stroke-width="1.3" fill="none"/></svg>
<svg class="a" style="left:1531px;top:233px;" width="24" height="23" viewBox="0 0 24 23"><circle cx="14" cy="9" r="7" fill="none" stroke="#333" stroke-width="1.5"/><path d="M9 14l-7 7" stroke="#333" stroke-width="1.6"/></svg>
<div class="t" style="left:1557px;top:236.2px;font-size:15px;color:#333;">查找</div>
<svg class="a" style="left:1609px;top:241px;" width="9" height="6" viewBox="0 0 9 6"><path d="M1 1l3.5 3.5L8 1" stroke="#424242" stroke-width="1.3" fill="none"/></svg>
<svg class="a" style="left:1530px;top:266px;" width="22" height="24" viewBox="0 0 22 24"><text x="8.5" y="9.5" font-size="10.5" fill="#b040c8" font-family="Liberation Sans">b</text><text x="13" y="20.5" font-size="10.5" fill="#2a8ad4" font-family="Liberation Sans">c</text><path d="M5.5 8C2.5 10 2.5 15 6 17h5M8.5 14.5L11 17l-2.5 2.5" stroke="#2a8ad4" stroke-width="1.3" fill="none"/></svg>
<div class="t" style="left:1557px;top:269.6px;font-size:15px;color:#333;">替换</div>
<svg class="a" style="left:1532px;top:300px;" width="18" height="22" viewBox="0 0 18 22"><path d="M2 1.5v17l4.5-4.5 3.5 7 2.5-1.2-3.5-7H15z" fill="#fff" stroke="#333" stroke-width="1.3" stroke-linejoin="round"/></svg>
<div class="t" style="left:1557px;top:303.1px;font-size:15px;color:#333;">选择</div>
<svg class="a" style="left:1592px;top:308px;" width="9" height="6" viewBox="0 0 9 6"><path d="M1 1l3.5 3.5L8 1" stroke="#424242" stroke-width="1.3" fill="none"/></svg>
<svg class="a" style="left:1660px;top:233px;" width="44" height="40" viewBox="0 0 44 40"><path d="M19.6 12.7C18 11 16 7 13.5 6.6h-2.1L4.2 13.4l7.2 7.1v13.2h8.2" fill="#fff" stroke="#444" stroke-width="1.3" stroke-linejoin="round"/><path d="M24.5 12.7C26 11 28 7 30.6 6.6h4.3l6.4 6.8-7.5 6.8v13.5h-9.3z" fill="#7ab8ea" stroke="#1e6fc0" stroke-width="1.2" stroke-linejoin="round"/><path d="M22.4 2.7v35" stroke="#444" stroke-width="1.8"/></svg>
<div class="t" style="left:1652px;top:277.6px;font-size:15px;color:#333;">全文排版</div>
<svg class="a" style="left:1750px;top:232px;" width="28" height="42" viewBox="0 0 28 42"><rect x="6.2" y="1.6" width="15" height="27.4" rx="7.5" fill="#7ab8ea" stroke="#1e6fc0" stroke-width="1.5"/><path d="M2.3 21.5c0 7 5 12 11.75 12s11.75-5 11.75-12" stroke="#444" stroke-width="1.5" fill="none"/><path d="M14 33.6v6.2" stroke="#444" stroke-width="1.6"/></svg>
<div class="t" style="left:1748px;top:278.6px;font-size:15px;color:#333;">听写</div>
<svg class="a" style="left:1759px;top:303px;" width="9" height="6" viewBox="0 0 9 6"><path d="M1 1l3.5 3.5L8 1" stroke="#424242" stroke-width="1.3" fill="none"/></svg>
<svg class="a" style="left:1821px;top:232px;" width="40" height="42" viewBox="0 0 40 42"><path d="M2 3h20l6 6v29H2z" fill="#ececec" stroke="#c6c6c6" stroke-width="1.2"/><path d="M10 25l12-12 6 6-12 12z" fill="#f4f4f4" stroke="#bdbdbd" stroke-width="1.6" stroke-linejoin="round"/><path d="M13 25l9-9" stroke="#c8c8c8" stroke-width="2"/><path d="M22 13l7-7 6 6-7 7z" fill="#d0d0d0" stroke="#bdbdbd" stroke-width="1.4" stroke-linejoin="round"/></svg>
<div class="t" style="left:1821px;top:278.6px;font-size:15px;color:#a6a6a6;">敏感</div>
<div class="t" style="left:1824px;top:297.6px;font-size:15px;color:#a6a6a6;">性</div>
<svg class="a" style="left:1841px;top:302px;" width="9" height="6" viewBox="0 0 9 6"><path d="M1 1l3.5 3.5L8 1" stroke="#a6a6a6" stroke-width="1.3" fill="none"/></svg>
<svg class="a" style="left:1889px;top:232px;" width="44" height="44" viewBox="0 0 44 44"><path d="M2.2 40l1.6-8.5L26.5 5l5 4.2L9 36z" fill="#f4f6fb" stroke="#1f5fc8" stroke-width="1.6" stroke-linejoin="round"/><path d="M27.5 3.2l2.2-1.6 4.8 4.2-1.6 2.2z" fill="#1f5fc8" stroke="#1f5fc8" stroke-width="1.5" stroke-linejoin="round"/><path d="M2.2 40l7-4" stroke="#1f5fc8" stroke-width="2.2"/><rect x="27" y="11.5" width="14.5" height="5.4" rx="2.7" fill="#1f5fc8"/><rect x="19" y="21" width="15" height="5.4" rx="2.7" fill="#1f5fc8"/><rect x="11" y="30" width="17" height="5.6" rx="2.8" fill="#1f5fc8"/></svg>
<div class="t" style="left:1902px;top:277.6px;font-size:15px;color:#333;">编</div>
<div class="t" style="left:1894px;top:296.6px;font-size:15px;color:#333;">辑器</div>
<svg class="a" style="left:1965px;top:234px;" width="38" height="38" viewBox="0 0 38 38"><rect x="2" y="1.8" width="34" height="34.5" fill="#fff" stroke="#e8572b" stroke-width="1.8"/><rect x="5.8" y="5.5" width="12" height="11.5" fill="none" stroke="#e8572b" stroke-width="1.3"/><rect x="20.7" y="5.5" width="12" height="11.5" fill="none" stroke="#e8572b" stroke-width="1.3"/><rect x="5.8" y="20.5" width="12" height="12" fill="none" stroke="#e8572b" stroke-width="1.3"/><rect x="20.7" y="20.5" width="12" height="12" fill="none" stroke="#e8572b" stroke-width="1.3"/></svg>
<div class="t" style="left:1976px;top:277.6px;font-size:15px;color:#333;">加</div>
<div class="t" style="left:1968px;top:296.6px;font-size:15px;color:#333;">载项</div>
<svg class="a" style="left:2045px;top:235px;" width="38" height="32" viewBox="0 0 38 32"><circle cx="19.5" cy="11.6" r="6.8" fill="none" stroke="#3fc4f0" stroke-width="4.6"/><path d="M12.8 12.5a6.8 6.8 0 0 0 13.4 0" fill="none" stroke="#ef5070" stroke-width="4.6"/><circle cx="10.9" cy="21.5" r="6.5" fill="none" stroke="#35bdf0" stroke-width="4.6"/><path d="M22 21.5a6.5 6.5 0 1 0 6.5-6.5" fill="none" stroke="#1fa0f0" stroke-width="4.6"/></svg>
<div class="t" style="left:2041px;top:277.6px;font-size:15px;color:#333;">保存到</div>
<div class="t" style="left:2033px;top:296.6px;font-size:15px;color:#333;">百度网盘</div>
<div class="a" style="left:469px;top:379px;width:1221px;height:890px;background:#fff;border:1px solid #cfcccb;border-bottom:none"></div>
<div class="a" style="left:653px;top:490px;width:1px;height:37px;background:#b9b9b9"></div>
<div class="a" style="left:617px;top:526px;width:37px;height:1px;background:#b9b9b9"></div>
<div class="a" style="left:1505px;top:490px;width:1px;height:37px;background:#b9b9b9"></div>
<div class="a" style="left:1505px;top:526px;width:37px;height:1px;background:#b9b9b9"></div>
<style>.dl{position:absolute;white-space:nowrap;line-height:1;font-size:22px;color:#383838}.pmk{vertical-align:0px;margin-left:1px}.dl b{color:#151515}.pm{color:#a6a6a6;font-size:19px;margin-left:0px}.ul{background-image:linear-gradient(#86a8dc,#86a8dc),linear-gradient(#9ab8e4,#9ab8e4);background-size:100% 1px,100% 1px;background-position:0 21.3px,0 23.3px;background-repeat:no-repeat}.sq{text-decoration:underline wavy #e0201c 1px;text-underline-offset:3px}</style>
<div class="dl" id="dl0" data-end="1207" style="left:655px;top:535.8px;letter-spacing:0.333px">中外合作院校——西浦，宁诺，港中深，<span class="ul">北师港浸</span>大等<svg class="pmk" width="15" height="12" viewBox="0 0 15 12"><path d="M13.2 0.8v6H1.8M5 3.6L1.8 6.8 5 10" stroke="#9c9c9c" stroke-width="1.1" fill="none"/></svg></div>
<div class="dl" id="dl1" data-end="937" style="left:655px;top:588.8px;letter-spacing:-0.317px">为什么选择中外合作院校？ <svg class="pmk" width="15" height="12" viewBox="0 0 15 12"><path d="M13.2 0.8v6H1.8M5 3.6L1.8 6.8 5 10" stroke="#9c9c9c" stroke-width="1.1" fill="none"/></svg></div>
<div class="dl" id="dl2" data-end="1474" style="left:655px;top:642.3px;letter-spacing:0.427px">1）学费/生活费远低于国外硕士（12w 上下/年），并且享受与本部同样的教学资源<svg class="pmk" width="15" height="12" viewBox="0 0 15 12"><path d="M13.2 0.8v6H1.8M5 3.6L1.8 6.8 5 10" stroke="#9c9c9c" stroke-width="1.1" fill="none"/></svg></div>
<div class="dl" id="dl3" data-end="926" style="left:655px;top:695.8px;letter-spacing:0.063px">2）非常方便在国内找实习<svg class="pmk" width="15" height="12" viewBox="0 0 15 12"><path d="M13.2 0.8v6H1.8M5 3.6L1.8 6.8 5 10" stroke="#9c9c9c" stroke-width="1.1" fill="none"/></svg></div>
<div class="dl" id="dl4" data-end="1227" style="left:655px;top:748.8px;letter-spacing:0.072px">3）学制 1 年，1.5 年，2 年，短于国内<span class="ul">大部分学硕和</span>专硕<svg class="pmk" width="15" height="12" viewBox="0 0 15 12"><path d="M13.2 0.8v6H1.8M5 3.6L1.8 6.8 5 10" stroke="#9c9c9c" stroke-width="1.1" fill="none"/></svg></div>
<div class="dl" id="dl5" data-end="1461" style="left:655px;top:802.3px;letter-spacing:0.589px">授课型硕士——<span class="ul">专硕</span>——>就业/<span class="ul">考公为主</span>&nbsp;&nbsp;&nbsp;&nbsp; 研究型硕士——<span class="ul">学硕</span>——>读博为主<svg class="pmk" width="15" height="12" viewBox="0 0 15 12"><path d="M13.2 0.8v6H1.8M5 3.6L1.8 6.8 5 10" stroke="#9c9c9c" stroke-width="1.1" fill="none"/></svg></div>
<div class="dl" id="dl6" data-end="780" style="left:655px;top:855.8px;letter-spacing:-1.187px">申请材料： <svg class="pmk" width="15" height="12" viewBox="0 0 15 12"><path d="M13.2 0.8v6H1.8M5 3.6L1.8 6.8 5 10" stroke="#9c9c9c" stroke-width="1.1" fill="none"/></svg></div>
<div class="dl" id="dl7" data-end="0" style="left:655px;top:908.8px;letter-spacing:0.000px">1.<span style="margin-left:13.5px"></span><b><span style="letter-spacing:0.6px">个人陈述</span><span style="letter-spacing:-0.45px">(Personal Statement)</span><span style="letter-spacing:-0.5px">（重要<span style="letter-spacing:-6px">！</span>）</span></b><svg class="pmk" width="15" height="12" viewBox="0 0 15 12"><path d="M13.2 0.8v6H1.8M5 3.6L1.8 6.8 5 10" stroke="#9c9c9c" stroke-width="1.1" fill="none"/></svg></div>
<div class="dl" id="dl8" data-end="1497" style="left:655px;top:962.3px;letter-spacing:0.446px">申请<b>英国，香港等地</b>的院校所必须<b>（澳洲，新西兰不需要）</b>：如果你申请英国和香港院</div>
<div class="dl" id="dl9" data-end="1196" style="left:655px;top:999.3px;letter-spacing:0.333px">校（包括中外合作），这一部分是最需要你认真去写。<svg class="pmk" width="15" height="12" viewBox="0 0 15 12"><path d="M13.2 0.8v6H1.8M5 3.6L1.8 6.8 5 10" stroke="#9c9c9c" stroke-width="1.1" fill="none"/></svg></div>
<div class="dl" id="dl10" data-end="1480" style="left:655px;top:1053.3px;letter-spacing:0.546px"><b>主要内容：</b>你的本科的专业背景，学术背景，你的实习/项目/科研经历，你申请该专</div>
<div class="dl" id="dl11" data-end="1486" style="left:655px;top:1090.3px;letter-spacing:0.459px">业的原因，以及你对该专业的了解，今后的职业规划等。这一部分也是在准备申请的</div>
<div class="dl" id="dl12" data-end="960" style="left:655px;top:1127.3px;letter-spacing:0.230px">时候所需时间比较多的部分，<svg class="pmk" width="15" height="12" viewBox="0 0 15 12"><path d="M13.2 0.8v6H1.8M5 3.6L1.8 6.8 5 10" stroke="#9c9c9c" stroke-width="1.1" fill="none"/></svg></div>
<div class="dl" id="dl13" data-end="1362" style="left:655px;top:1181.8px;letter-spacing:0.192px">推荐：大家可以借鉴一下网上或者 <span class="sq">xhs</span> 上的一些范文——不要完全照搬<svg class="pmk" width="15" height="12" viewBox="0 0 15 12"><path d="M13.2 0.8v6H1.8M5 3.6L1.8 6.8 5 10" stroke="#9c9c9c" stroke-width="1.1" fill="none"/></svg></div>
<div class="dl" id="dl14" data-end="1170" style="left:698px;top:1233.8px;letter-spacing:0.469px">可以在<span class="ul">淘宝/闲鱼</span>上花一点钱找人帮忙润色一下<svg class="pmk" width="15" height="12" viewBox="0 0 15 12"><path d="M13.2 0.8v6H1.8M5 3.6L1.8 6.8 5 10" stroke="#9c9c9c" stroke-width="1.1" fill="none"/></svg></div>
<div class="a" style="left:655px;top:1238px;width:13px;height:13px;border-radius:50%;background:#111"></div>
<svg class="a" style="left:1457px;top:619px;" width="14" height="21" viewBox="0 0 14 21"><path d="M3 1h8M3 20h8M7 1v19" stroke="#111" stroke-width="1.6"/></svg>
<div class="a" style="left:2163px;top:693px;width:20px;height:34px;background:#8c8c8c;border-radius:4px 0 0 4px"></div>
<svg class="a" style="left:2168px;top:702px;" width="10" height="16" viewBox="0 0 10 16"><path d="M7.5 2l-5 6 5 6" stroke="#fff" stroke-width="1.8" fill="none"/></svg>
<div class="a" style="left:0px;top:1263px;width:2183px;height:29px;background:#f3f3f3"></div>
<div class="t" style="left:13px;top:1269.9px;font-size:15px;color:#2b2b2b;">第 1 页<span style="letter-spacing:-4px">，</span> 共 2 页</div>
<div class="t" style="left:149px;top:1269.9px;font-size:15px;color:#2b2b2b;">1023 个字</div>
<svg class="a" style="left:243px;top:1269px;" width="21" height="19" viewBox="0 0 21 19"><path d="M11 1.5H1.5v15h9" fill="none" stroke="#333" stroke-width="1.5"/><path d="M11 1.5h6.5v6" fill="none" stroke="#333" stroke-width="1.5"/><path d="M11.5 10l7 7.5M18.5 10l-7 7.5" stroke="#333" stroke-width="1.5"/></svg>
<div class="t" style="left:284px;top:1269.9px;font-size:15px;color:#2b2b2b;">英语(美国)</div>
<div class="t" style="left:439px;top:1269.9px;font-size:15px;color:#2b2b2b;">文本预测: 打开</div>
<svg class="a" style="left:562px;top:1268px;" width="20" height="20" viewBox="0 0 20 20"><circle cx="6" cy="4" r="2.2" fill="none" stroke="#333" stroke-width="1.2"/><path d="M2 7.5l4 1.5 5-2M6 9v4l-2 5M6 13l3 4M13 9a5 5 0 1 1 -1 8" fill="none" stroke="#333" stroke-width="1.3"/><path d="M12 13l2 2 4-4" stroke="#333" stroke-width="1.3" fill="none"/></svg>
<div class="t" style="left:585px;top:1269.9px;font-size:15px;color:#2b2b2b;">辅助功能: 一切就绪</div>
<svg class="a" style="left:1728px;top:1269px;" width="20" height="18" viewBox="0 0 20 18"><path d="M1 5V1h4M15 1h4v4M19 13v4h-4M5 17H1v-4" stroke="#333" stroke-width="1.3" fill="none"/><path d="M6 3h6l3 3v9H6z" fill="none" stroke="#333" stroke-width="1.2"/></svg>
<div class="t" style="left:1751px;top:1269.9px;font-size:15px;color:#2b2b2b;">专注</div>
<svg class="a" style="left:1810px;top:1270px;" width="20" height="16" viewBox="0 0 20 16"><path d="M1 2c3-1 6-1 9 1 3-2 6-2 9-1v12c-3-1-6-1-9 1-3-2-6-2-9-1z M10 3v12" fill="none" stroke="#333" stroke-width="1.3"/><path d="M3 6h5M3 9h5M12 6h5M12 9h5" stroke="#333" stroke-width="1"/></svg>
<div class="a" style="left:1847px;top:1263px;width:51px;height:29px;background:#dcdcdc"></div>
<svg class="a" style="left:1863px;top:1268px;" width="17" height="19" viewBox="0 0 17 19"><rect x="1" y="1" width="15" height="17" fill="none" stroke="#333" stroke-width="1.3"/><path d="M4 5h9M4 8h9M4 11h9M4 14h9" stroke="#333" stroke-width="1"/></svg>
<svg class="a" style="left:1913px;top:1268px;" width="21" height="20" viewBox="0 0 21 20"><rect x="1" y="1" width="15" height="16" fill="none" stroke="#333" stroke-width="1.3"/><path d="M4 5h9M4 8h5" stroke="#333" stroke-width="1"/><circle cx="14.5" cy="14" r="5" fill="#f3f3f3" stroke="#333" stroke-width="1.2"/><path d="M9.5 14h10M14.5 9c-2 3-2 7 0 10M14.5 9c2 3 2 7 0 10" stroke="#333" stroke-width="0.9" fill="none"/></svg>
<div class="a" style="left:1955px;top:1277px;width:11px;height:1.3px;background:#444"></div>
<div class="a" style="left:1973px;top:1277px;width:126px;height:1.3px;background:#666"></div>
<div class="a" style="left:2034px;top:1270px;width:8px;height:15px;background:#555;border-radius:1px"></div>
<div class="a" style="left:2104px;top:1277px;width:12px;height:1.3px;background:#444"></div>
<div class="a" style="left:2109.4px;top:1271.5px;width:1.3px;height:12px;background:#444"></div>
<div class="t" style="left:2133px;top:1269.9px;font-size:15px;color:#2b2b2b;">120%</div>
<div class="a" style="left:10px;top:1229px;width:145px;height:30px;background:#6b6b6b;border-radius:5px"></div>
<svg class="a" style="left:17px;top:1236px;" width="17" height="17" viewBox="0 0 17 17"><circle cx="8.5" cy="8.5" r="8" fill="#e3e3e3"/><rect x="5.5" y="5" width="1.6" height="3" rx=".8" fill="#6b6b6b"/><rect x="9.9" y="5" width="1.6" height="3" rx=".8" fill="#6b6b6b"/><path d="M4.5 9.5h8a4 4 0 0 1-8 0z" fill="#6b6b6b"/></svg>
<div class="a" style="left:40px;top:1234px;width:1px;height:20px;background:#8a8a8a"></div>
<div class="t" style="left:49px;top:1238.6px;font-size:12px;color:#b9b9b9;">说点什么...</div>
<div class="a" style="left:124px;top:1234px;width:1px;height:20px;background:#8a8a8a"></div>
<svg class="a" style="left:134px;top:1238px;" width="9" height="13" viewBox="0 0 9 13"><path d="M7 1.5L2 6.5l5 5" stroke="#fff" stroke-width="1.8" fill="none"/></svg>
<div class="a" style="left:2183px;top:29px;width:371px;height:1304px;background:#fff;border-left:1px solid #e6e7ea"></div>
<div class="a" style="left:2527px;top:29px;width:27px;height:29px;background:#f4f5f7"></div>
<svg class="a" style="left:2537px;top:37px;" width="14" height="13" viewBox="0 0 14 13"><path d="M0.5 1.5h13M0.5 6.5h13M0.5 11.5h13" stroke="#4a4f5c" stroke-width="1.8"/></svg>
<svg class="a" style="left:2189px;top:35px;" width="17" height="15" viewBox="0 0 17 15"><circle cx="9" cy="4.5" r="3.5" fill="#4a4f5c"/><path d="M2 14c0-4 3-6 7-6s7 2 7 6z" fill="#4a4f5c"/><circle cx="6" cy="4.5" r="3.5" fill="#4a4f5c" stroke="#fff" stroke-width="1"/><path d="M0 14c0-4 2.5-6 6-6s6 2 6 6z" fill="#4a4f5c" stroke="#fff" stroke-width="1"/></svg>
<div class="t" style="left:2209px;top:37.1px;font-size:12px;color:#111;">管理成员</div>
<div class="a" style="left:2193px;top:67px;width:340px;height:33px;border:1px solid #dcdee4;border-radius:6px;background:#fff"></div>
<svg class="a" style="left:2201px;top:76px;" width="16" height="16" viewBox="0 0 16 16"><circle cx="7" cy="7" r="5.8" fill="none" stroke="#4a4f5c" stroke-width="1.4"/><path d="M11 11l3.2 3.2" stroke="#4a4f5c" stroke-width="1.5"/></svg>
<div class="t" style="left:2226px;top:77.1px;font-size:13px;color:#a3a6b0;">搜索成员</div>
<div class="a" style="left:2515px;top:67px;width:34px;height:33px;background:#f3f4f6;border-radius:0 8px 8px 0"></div>
<svg class="a" style="left:2524px;top:75px;" width="20" height="20" viewBox="0 0 20 20"><circle cx="9" cy="6" r="4.5" fill="none" stroke="#4a4f5c" stroke-width="1.4"/><path d="M2 17c0-4 3-6 7-6" fill="none" stroke="#4a4f5c" stroke-width="1.4"/><path d="M15 12v7M11.5 15.5h7" stroke="#4a4f5c" stroke-width="1.6"/></svg>
<div class="a" style="left:2193px;top:107px;width:356px;height:32px;background:#f2f3f5;border-radius:8px"></div>
<div class="a" style="left:2197px;top:110px;width:170px;height:26px;background:#fff;border-radius:6px;box-shadow:0 0 1px rgba(0,0,0,.08)"></div>
<div class="t" style="left:2197px;top:117px;width:170px;text-align:center;font-size:12px;color:#111">会议中(41)</div>
<div class="t" style="left:2373px;top:117px;width:172px;text-align:center;font-size:12px;color:#444">未入会</div>
<svg class="a" style="left:2195px;top:154px;overflow:hidden" width="30" height="30" viewBox="0 0 30 30"><clipPath id="av0"><circle cx="15" cy="15" r="15"/></clipPath><g clip-path="url(#av0)"><rect width="30" height="30" fill="#4a4434"/><path d="M-2 8c8-4 16 2 34-3v5c-14 5-22-1-34 3z" fill="#8a8068"/><path d="M-2 16c10-5 18 3 34-3v4c-14 5-22-2-34 3z" fill="#6e6650"/><path d="M-2 23c8-3 16 2 34-2v9H-2z" fill="#3a3328"/><path d="M2 27c4-2 8 0 12-1" stroke="#c08040" stroke-width="2"/><circle cx="18" cy="10" r="1.5" fill="#e0d8b0"/></g></svg>
<div class="t" style="left:2233px;top:155.6px;font-size:11px;color:#111;">吴泽勇</div>
<div class="t" style="left:2233px;top:172.1px;font-size:11px;color:#8c8fa0;">(主持人, 我)</div>
<svg class="a" style="left:2489px;top:161px;" width="16" height="16" viewBox="0 0 16 16"><circle cx="8" cy="8" r="7" fill="none" stroke="#f04a3a" stroke-width="1.1"/><circle cx="8" cy="8" r="4.6" fill="#f03a2c"/></svg>
<svg class="a" style="left:2513px;top:160px;" width="15" height="18" viewBox="0 0 15 18"><g fill="#8f939e"><rect x="4.5" y="1" width="6" height="10" rx="3"/><path d="M2 8c0 3 2.5 5 5.5 5s5.5-2 5.5-5" fill="none" stroke="#8f939e" stroke-width="1.2"/><rect x="6.9" y="13" width="1.2" height="3"/><rect x="4.5" y="15.5" width="6" height="1.2"/></g><path d="M1.5 15.5L13.5 2" stroke="#f0442c" stroke-width="1.3"/></svg>
<svg class="a" style="left:2195px;top:198px;overflow:hidden" width="30" height="30" viewBox="0 0 30 30"><clipPath id="av1"><circle cx="15" cy="15" r="15"/></clipPath><g clip-path="url(#av1)"><rect width="30" height="30" fill="#fff"/><path d="M8 4h14v3H8z" fill="#1e8a6a"/><path d="M9 7h12v12c0 4-3 6-6 7-3-1-6-3-6-7z" fill="#fff" stroke="#b03038" stroke-width="1.4"/><path d="M10 8h10v3H10z" fill="#c03040"/><circle cx="15" cy="16" r="3.5" fill="#6aa0e0"/><path d="M6 22c3 3 6 4 9 4s6-1 9-4l-1 4H7z" fill="#1e8a6a"/><path d="M5 12l2 6M25 12l-2 6" stroke="#e87030" stroke-width="1.5"/></g></svg>
<div class="t" style="left:2233px;top:199.6px;font-size:11px;color:#111;">郭树雨</div>
<div class="t" style="left:2233px;top:216.1px;font-size:11px;color:#8c8fa0;">(访客)</div>
<svg class="a" style="left:2463px;top:207px;" width="16" height="14" viewBox="0 0 16 14"><rect x="0.5" y="1" width="15" height="10" rx="1.5" fill="#7a7e8a"/><rect x="5" y="12" width="6" height="1.5" fill="#7a7e8a"/><path d="M5 8c0-2 1.5-3.5 4-3.5V3l2.5 2.5L9 8V6.5C7 6.5 6 7 5 8z" fill="#fff"/></svg>
<svg class="a" style="left:2489px;top:204px;" width="15" height="18" viewBox="0 0 15 18"><rect x="4.5" y="1" width="6" height="10" rx="3" fill="#27c07d"/><path d="M2 8c0 3 2.5 5 5.5 5s5.5-2 5.5-5" fill="none" stroke="#8f939e" stroke-width="1.2"/><rect x="6.9" y="13" width="1.2" height="3" fill="#8f939e"/><rect x="4.5" y="15.5" width="6" height="1.2" fill="#8f939e"/></svg>
<svg class="a" style="left:2512px;top:205px;" width="18" height="16" viewBox="0 0 18 16"><rect x="1" y="3" width="11" height="10" rx="1.5" fill="#8f939e"/><path d="M12 6.5l5-3v9l-5-3z" fill="#8f939e"/><path d="M1 14.5L15 1.5" stroke="#fff" stroke-width="2.6"/><path d="M1 14.5L15 1.5" stroke="#f0442c" stroke-width="1.3"/></svg>
<svg class="a" style="left:2195px;top:242px;overflow:hidden" width="30" height="30" viewBox="0 0 30 30"><clipPath id="av2"><circle cx="15" cy="15" r="15"/></clipPath><g clip-path="url(#av2)"><rect width="30" height="30" fill="#2848a0"/><path d="M20 0h10v14H20z" fill="#40c0a0"/><path d="M0 12l8-2 4 10-12 6z" fill="#101828"/><rect x="9" y="3" width="12" height="13" fill="#f0e040"/><circle cx="13" cy="8" r="2" fill="#fff"/><circle cx="17.5" cy="8" r="2" fill="#fff"/><path d="M9 16h12l-2 3h-8z" fill="#d03030"/><path d="M6 20h18v10H6z" fill="#3050b0"/></g></svg>
<div class="t" style="left:2233px;top:243.6px;font-size:11px;color:#111;">21人工王鑫涛</div>
<div class="t" style="left:2233px;top:260.1px;font-size:11px;color:#8c8fa0;">(访客)</div>
<svg class="a" style="left:2489px;top:248px;" width="15" height="18" viewBox="0 0 15 18"><g fill="#8f939e"><rect x="4.5" y="1" width="6" height="10" rx="3"/><path d="M2 8c0 3 2.5 5 5.5 5s5.5-2 5.5-5" fill="none" stroke="#8f939e" stroke-width="1.2"/><rect x="6.9" y="13" width="1.2" height="3"/><rect x="4.5" y="15.5" width="6" height="1.2"/></g><path d="M1.5 15.5L13.5 2" stroke="#f0442c" stroke-width="1.3"/></svg>
<svg class="a" style="left:2512px;top:249px;" width="18" height="16" viewBox="0 0 18 16"><rect x="1" y="3" width="11" height="10" rx="1.5" fill="#8f939e"/><path d="M12 6.5l5-3v9l-5-3z" fill="#8f939e"/><path d="M1 14.5L15 1.5" stroke="#fff" stroke-width="2.6"/><path d="M1 14.5L15 1.5" stroke="#f0442c" stroke-width="1.3"/></svg>
<svg class="a" style="left:2195px;top:286px;overflow:hidden" width="30" height="30" viewBox="0 0 30 30"><clipPath id="av3"><circle cx="15" cy="15" r="15"/></clipPath><g clip-path="url(#av3)"><rect width="30" height="30" fill="#9aa2aa"/><path d="M0 18c8 0 14 4 20 12H0z" fill="#d8c8a0"/><path d="M14 4v26M19 4v26M11 8h11M10 14h13M12 20h9" stroke="#2a2a2a" stroke-width="1.2"/><path d="M14 8l5 6M19 8l-5 6M14 14l5 6M19 14l-5 6" stroke="#2a2a2a" stroke-width="0.7"/></g></svg>
<div class="t" style="left:2233px;top:287.6px;font-size:11px;color:#111;">B1n</div>
<div class="t" style="left:2233px;top:304.1px;font-size:11px;color:#8c8fa0;">(访客)</div>
<svg class="a" style="left:2489px;top:292px;" width="15" height="18" viewBox="0 0 15 18"><g fill="#8f939e"><rect x="4.5" y="1" width="6" height="10" rx="3"/><path d="M2 8c0 3 2.5 5 5.5 5s5.5-2 5.5-5" fill="none" stroke="#8f939e" stroke-width="1.2"/><rect x="6.9" y="13" width="1.2" height="3"/><rect x="4.5" y="15.5" width="6" height="1.2"/></g><path d="M1.5 15.5L13.5 2" stroke="#f0442c" stroke-width="1.3"/></svg>
<svg class="a" style="left:2512px;top:293px;" width="18" height="16" viewBox="0 0 18 16"><rect x="1" y="3" width="11" height="10" rx="1.5" fill="#8f939e"/><path d="M12 6.5l5-3v9l-5-3z" fill="#8f939e"/><path d="M1 14.5L15 1.5" stroke="#fff" stroke-width="2.6"/><path d="M1 14.5L15 1.5" stroke="#f0442c" stroke-width="1.3"/></svg>
<svg class="a" style="left:2195px;top:330px;overflow:hidden" width="30" height="30" viewBox="0 0 30 30"><clipPath id="av4"><circle cx="15" cy="15" r="15"/></clipPath><g clip-path="url(#av4)"><rect width="30" height="30" fill="#3a3a32"/><path d="M0 0h8v30H0z" fill="#6a6660"/><ellipse cx="15" cy="17" rx="8" ry="11" fill="#98b848"/><rect x="8" y="5" width="14" height="4" rx="1.5" fill="#101010"/><circle cx="15" cy="18" r="4.2" fill="#b86a40"/><path d="M11 26c2 2 6 2 8 0v4h-8z" fill="#d09070"/></g></svg>
<div class="t" style="left:2233px;top:331.6px;font-size:11px;color:#111;">LYM</div>
<div class="t" style="left:2233px;top:348.1px;font-size:11px;color:#8c8fa0;">(访客)</div>
<svg class="a" style="left:2489px;top:336px;" width="15" height="18" viewBox="0 0 15 18"><g fill="#8f939e"><rect x="4.5" y="1" width="6" height="10" rx="3"/><path d="M2 8c0 3 2.5 5 5.5 5s5.5-2 5.5-5" fill="none" stroke="#8f939e" stroke-width="1.2"/><rect x="6.9" y="13" width="1.2" height="3"/><rect x="4.5" y="15.5" width="6" height="1.2"/></g><path d="M1.5 15.5L13.5 2" stroke="#f0442c" stroke-width="1.3"/></svg>
<svg class="a" style="left:2512px;top:337px;" width="18" height="16" viewBox="0 0 18 16"><rect x="1" y="3" width="11" height="10" rx="1.5" fill="#8f939e"/><path d="M12 6.5l5-3v9l-5-3z" fill="#8f939e"/><path d="M1 14.5L15 1.5" stroke="#fff" stroke-width="2.6"/><path d="M1 14.5L15 1.5" stroke="#f0442c" stroke-width="1.3"/></svg>
<svg class="a" style="left:2195px;top:374px;overflow:hidden" width="30" height="30" viewBox="0 0 30 30"><clipPath id="av5"><circle cx="15" cy="15" r="15"/></clipPath><g clip-path="url(#av5)"><rect width="30" height="30" fill="#d8605a"/><path d="M6 30c0-10 3-20 9-20s9 10 9 20z" fill="#e8c8c0"/><ellipse cx="15" cy="15" rx="6" ry="7" fill="#f8e8e0"/><path d="M8 6c3-3 11-3 14 0l-2 3H10z" fill="#c02828"/><circle cx="12.5" cy="15" r="1" fill="#a06060"/><circle cx="17.5" cy="15" r="1" fill="#a06060"/><path d="M4 24l4 6H2z" fill="#fff"/></g></svg>
<div class="t" style="left:2233px;top:375.6px;font-size:11px;color:#111;">Ye.</div>
<div class="t" style="left:2233px;top:392.1px;font-size:11px;color:#8c8fa0;">(访客)</div>
<svg class="a" style="left:2489px;top:380px;" width="15" height="18" viewBox="0 0 15 18"><g fill="#8f939e"><rect x="4.5" y="1" width="6" height="10" rx="3"/><path d="M2 8c0 3 2.5 5 5.5 5s5.5-2 5.5-5" fill="none" stroke="#8f939e" stroke-width="1.2"/><rect x="6.9" y="13" width="1.2" height="3"/><rect x="4.5" y="15.5" width="6" height="1.2"/></g><path d="M1.5 15.5L13.5 2" stroke="#f0442c" stroke-width="1.3"/></svg>
<svg class="a" style="left:2512px;top:381px;" width="18" height="16" viewBox="0 0 18 16"><rect x="1" y="3" width="11" height="10" rx="1.5" fill="#8f939e"/><path d="M12 6.5l5-3v9l-5-3z" fill="#8f939e"/><path d="M1 14.5L15 1.5" stroke="#fff" stroke-width="2.6"/><path d="M1 14.5L15 1.5" stroke="#f0442c" stroke-width="1.3"/></svg>
<div class="a" style="left:2195px;top:418px;width:30px;height:30px;border-radius:50%;background:#4472c4"></div>
<div class="t" style="left:2195px;top:426.1px;width:30px;text-align:center;font-size:14px;color:#fff">Y</div>
<div class="t" style="left:2233px;top:419.6px;font-size:11px;color:#111;">ysq</div>
<div class="t" style="left:2233px;top:436.1px;font-size:11px;color:#8c8fa0;">(访客)</div>
<svg class="a" style="left:2489px;top:424px;" width="15" height="18" viewBox="0 0 15 18"><g fill="#8f939e"><rect x="4.5" y="1" width="6" height="10" rx="3"/><path d="M2 8c0 3 2.5 5 5.5 5s5.5-2 5.5-5" fill="none" stroke="#8f939e" stroke-width="1.2"/><rect x="6.9" y="13" width="1.2" height="3"/><rect x="4.5" y="15.5" width="6" height="1.2"/></g><path d="M1.5 15.5L13.5 2" stroke="#f0442c" stroke-width="1.3"/></svg>
<svg class="a" style="left:2512px;top:425px;" width="18" height="16" viewBox="0 0 18 16"><rect x="1" y="3" width="11" height="10" rx="1.5" fill="#8f939e"/><path d="M12 6.5l5-3v9l-5-3z" fill="#8f939e"/><path d="M1 14.5L15 1.5" stroke="#fff" stroke-width="2.6"/><path d="M1 14.5L15 1.5" stroke="#f0442c" stroke-width="1.3"/></svg>
<svg class="a" style="left:2195px;top:462px;overflow:hidden" width="30" height="30" viewBox="0 0 30 30"><clipPath id="av7"><circle cx="15" cy="15" r="15"/></clipPath><g clip-path="url(#av7)"><rect width="30" height="30" fill="#7a6a5a"/><ellipse cx="15" cy="17" rx="7" ry="10" fill="#d8b8a8"/><path d="M4 30V12C4 4 10 1 15 1s11 3 11 11v18h-4V14c0-4-3-7-7-7s-7 3-7 7v16z" fill="#5a4838"/><path d="M13 22h4" stroke="#c06060" stroke-width="1.2"/><path d="M20 8l8 14" stroke="#c8b8a0" stroke-width="3"/></g></svg>
<div class="t" style="left:2233px;top:463.6px;font-size:11px;color:#111;">曾曾</div>
<div class="t" style="left:2233px;top:480.1px;font-size:11px;color:#8c8fa0;">(访客)</div>
<svg class="a" style="left:2489px;top:468px;" width="15" height="18" viewBox="0 0 15 18"><g fill="#8f939e"><rect x="4.5" y="1" width="6" height="10" rx="3"/><path d="M2 8c0 3 2.5 5 5.5 5s5.5-2 5.5-5" fill="none" stroke="#8f939e" stroke-width="1.2"/><rect x="6.9" y="13" width="1.2" height="3"/><rect x="4.5" y="15.5" width="6" height="1.2"/></g><path d="M1.5 15.5L13.5 2" stroke="#f0442c" stroke-width="1.3"/></svg>
<svg class="a" style="left:2512px;top:469px;" width="18" height="16" viewBox="0 0 18 16"><rect x="1" y="3" width="11" height="10" rx="1.5" fill="#8f939e"/><path d="M12 6.5l5-3v9l-5-3z" fill="#8f939e"/><path d="M1 14.5L15 1.5" stroke="#fff" stroke-width="2.6"/><path d="M1 14.5L15 1.5" stroke="#f0442c" stroke-width="1.3"/></svg>
<svg class="a" style="left:2195px;top:506px;overflow:hidden" width="30" height="30" viewBox="0 0 30 30"><clipPath id="av8"><circle cx="15" cy="15" r="15"/></clipPath><g clip-path="url(#av8)"><rect width="30" height="30" fill="#8a5a30"/><path d="M0 18l10-6 8 18H0z" fill="#e09040"/><path d="M8 4c5-3 12-2 14 4l-2 6H9z" fill="#5a3a28"/><ellipse cx="15" cy="13" rx="5" ry="5" fill="#f0d8c8"/><path d="M6 30c2-8 5-12 9-12s8 4 10 12z" fill="#3a2a28"/><path d="M22 6l4 6-3 2z" fill="#f0c040"/></g></svg>
<div class="t" style="left:2233px;top:507.6px;font-size:11px;color:#111;">陈冬杰</div>
<div class="t" style="left:2233px;top:524.1px;font-size:11px;color:#8c8fa0;">(访客)</div>
<svg class="a" style="left:2489px;top:512px;" width="15" height="18" viewBox="0 0 15 18"><g fill="#8f939e"><rect x="4.5" y="1" width="6" height="10" rx="3"/><path d="M2 8c0 3 2.5 5 5.5 5s5.5-2 5.5-5" fill="none" stroke="#8f939e" stroke-width="1.2"/><rect x="6.9" y="13" width="1.2" height="3"/><rect x="4.5" y="15.5" width="6" height="1.2"/></g><path d="M1.5 15.5L13.5 2" stroke="#f0442c" stroke-width="1.3"/></svg>
<svg class="a" style="left:2512px;top:513px;" width="18" height="16" viewBox="0 0 18 16"><rect x="1" y="3" width="11" height="10" rx="1.5" fill="#8f939e"/><path d="M12 6.5l5-3v9l-5-3z" fill="#8f939e"/><path d="M1 14.5L15 1.5" stroke="#fff" stroke-width="2.6"/><path d="M1 14.5L15 1.5" stroke="#f0442c" stroke-width="1.3"/></svg>
<svg class="a" style="left:2195px;top:550px;overflow:hidden" width="30" height="30" viewBox="0 0 30 30"><clipPath id="av9"><circle cx="15" cy="15" r="15"/></clipPath><g clip-path="url(#av9)"><rect width="30" height="30" fill="#dcd6e4"/><path d="M0 14h30v3H0z" fill="#b89888"/><path d="M3 10v10M8 10v10" stroke="#b89888" stroke-width="1.4"/><ellipse cx="17" cy="18" rx="6" ry="7" fill="#fff"/><circle cx="16" cy="10" r="5.5" fill="#e05050"/><path d="M14 4l2 2 2-2" stroke="#40a040" stroke-width="1.5" fill="none"/><ellipse cx="11" cy="22" rx="5" ry="2" fill="#70b040"/><ellipse cx="12" cy="21" rx="3" ry="1.5" fill="#e0a030"/></g></svg>
<div class="t" style="left:2233px;top:551.6px;font-size:11px;color:#111;">冯裕钵</div>
<div class="t" style="left:2233px;top:568.1px;font-size:11px;color:#8c8fa0;">(访客)</div>
<svg class="a" style="left:2489px;top:556px;" width="15" height="18" viewBox="0 0 15 18"><g fill="#8f939e"><rect x="4.5" y="1" width="6" height="10" rx="3"/><path d="M2 8c0 3 2.5 5 5.5 5s5.5-2 5.5-5" fill="none" stroke="#8f939e" stroke-width="1.2"/><rect x="6.9" y="13" width="1.2" height="3"/><rect x="4.5" y="15.5" width="6" height="1.2"/></g><path d="M1.5 15.5L13.5 2" stroke="#f0442c" stroke-width="1.3"/></svg>
<svg class="a" style="left:2512px;top:557px;" width="18" height="16" viewBox="0 0 18 16"><rect x="1" y="3" width="11" height="10" rx="1.5" fill="#8f939e"/><path d="M12 6.5l5-3v9l-5-3z" fill="#8f939e"/><path d="M1 14.5L15 1.5" stroke="#fff" stroke-width="2.6"/><path d="M1 14.5L15 1.5" stroke="#f0442c" stroke-width="1.3"/></svg>
<svg class="a" style="left:2195px;top:594px;overflow:hidden" width="30" height="30" viewBox="0 0 30 30"><clipPath id="av10"><circle cx="15" cy="15" r="15"/></clipPath><g clip-path="url(#av10)"><rect width="30" height="30" fill="#c8a088"/><path d="M2 14C2 5 8 2 15 2s13 3 13 12l-3-3H5z" fill="#7a5438"/><ellipse cx="15" cy="16" rx="10" ry="8" fill="#f8e4d8"/><ellipse cx="10.5" cy="16" rx="2.2" ry="1.6" fill="#c81818"/><ellipse cx="19.5" cy="16" rx="2.2" ry="1.6" fill="#c81818"/><path d="M2 24c6 2 20 2 26 0v6H2z" fill="#2850a0"/></g></svg>
<div class="t" style="left:2233px;top:595.6px;font-size:11px;color:#111;">工作人员A</div>
<div class="t" style="left:2233px;top:612.1px;font-size:11px;color:#8c8fa0;">(访客)</div>
<svg class="a" style="left:2489px;top:600px;" width="15" height="18" viewBox="0 0 15 18"><g fill="#8f939e"><rect x="4.5" y="1" width="6" height="10" rx="3"/><path d="M2 8c0 3 2.5 5 5.5 5s5.5-2 5.5-5" fill="none" stroke="#8f939e" stroke-width="1.2"/><rect x="6.9" y="13" width="1.2" height="3"/><rect x="4.5" y="15.5" width="6" height="1.2"/></g><path d="M1.5 15.5L13.5 2" stroke="#f0442c" stroke-width="1.3"/></svg>
<svg class="a" style="left:2512px;top:601px;" width="18" height="16" viewBox="0 0 18 16"><rect x="1" y="3" width="11" height="10" rx="1.5" fill="#8f939e"/><path d="M12 6.5l5-3v9l-5-3z" fill="#8f939e"/><path d="M1 14.5L15 1.5" stroke="#fff" stroke-width="2.6"/><path d="M1 14.5L15 1.5" stroke="#f0442c" stroke-width="1.3"/></svg>
<svg class="a" style="left:2195px;top:638px;overflow:hidden" width="30" height="30" viewBox="0 0 30 30"><clipPath id="av11"><circle cx="15" cy="15" r="15"/></clipPath><g clip-path="url(#av11)"><rect width="30" height="30" fill="#9a9088"/><path d="M0 0h30v12C20 6 10 6 0 12z" fill="#c8c0b8"/><ellipse cx="14" cy="15" rx="8" ry="6" fill="#e0c0b0"/><path d="M5 12c3-5 14-6 18-1l-2 3c-4-3-10-3-14 1z" fill="#302820"/><path d="M0 22c8-3 20-3 30 2v6H0z" fill="#e8e4e0"/></g></svg>
<div class="t" style="left:2233px;top:639.6px;font-size:11px;color:#111;">胡海静</div>
<div class="t" style="left:2233px;top:656.1px;font-size:11px;color:#8c8fa0;">(访客)</div>
<svg class="a" style="left:2489px;top:644px;" width="15" height="18" viewBox="0 0 15 18"><g fill="#8f939e"><rect x="4.5" y="1" width="6" height="10" rx="3"/><path d="M2 8c0 3 2.5 5 5.5 5s5.5-2 5.5-5" fill="none" stroke="#8f939e" stroke-width="1.2"/><rect x="6.9" y="13" width="1.2" height="3"/><rect x="4.5" y="15.5" width="6" height="1.2"/></g><path d="M1.5 15.5L13.5 2" stroke="#f0442c" stroke-width="1.3"/></svg>
<svg class="a" style="left:2512px;top:645px;" width="18" height="16" viewBox="0 0 18 16"><rect x="1" y="3" width="11" height="10" rx="1.5" fill="#8f939e"/><path d="M12 6.5l5-3v9l-5-3z" fill="#8f939e"/><path d="M1 14.5L15 1.5" stroke="#fff" stroke-width="2.6"/><path d="M1 14.5L15 1.5" stroke="#f0442c" stroke-width="1.3"/></svg>
<svg class="a" style="left:2195px;top:682px;overflow:hidden" width="30" height="30" viewBox="0 0 30 30"><clipPath id="av12"><circle cx="15" cy="15" r="15"/></clipPath><g clip-path="url(#av12)"><rect width="30" height="30" fill="#3a78c8"/><path d="M0 0h30v12H0z" fill="#5090d8"/><path d="M0 16h30v14H0z" fill="#305a90"/><path d="M0 16h30" stroke="#b0c8e0" stroke-width="1.5"/><path d="M10 16l3-3 4 1 3 2z" fill="#8a7a60"/><path d="M0 22h30v8H0z" fill="#1a3868"/></g></svg>
<div class="t" style="left:2233px;top:683.6px;font-size:11px;color:#111;">林剑</div>
<div class="t" style="left:2233px;top:700.1px;font-size:11px;color:#8c8fa0;">(访客)</div>
<svg class="a" style="left:2489px;top:688px;" width="15" height="18" viewBox="0 0 15 18"><g fill="#8f939e"><rect x="4.5" y="1" width="6" height="10" rx="3"/><path d="M2 8c0 3 2.5 5 5.5 5s5.5-2 5.5-5" fill="none" stroke="#8f939e" stroke-width="1.2"/><rect x="6.9" y="13" width="1.2" height="3"/><rect x="4.5" y="15.5" width="6" height="1.2"/></g><path d="M1.5 15.5L13.5 2" stroke="#f0442c" stroke-width="1.3"/></svg>
<svg class="a" style="left:2512px;top:689px;" width="18" height="16" viewBox="0 0 18 16"><rect x="1" y="3" width="11" height="10" rx="1.5" fill="#8f939e"/><path d="M12 6.5l5-3v9l-5-3z" fill="#8f939e"/><path d="M1 14.5L15 1.5" stroke="#fff" stroke-width="2.6"/><path d="M1 14.5L15 1.5" stroke="#f0442c" stroke-width="1.3"/></svg>
<svg class="a" style="left:2195px;top:726px;overflow:hidden" width="30" height="30" viewBox="0 0 30 30"><clipPath id="av13"><circle cx="15" cy="15" r="15"/></clipPath><g clip-path="url(#av13)"><rect width="30" height="30" fill="#e8e0d8"/><path d="M2 16C2 4 10 1 16 1s12 5 12 12l-5-3-5 4-8-3-5 6z" fill="#181418"/><ellipse cx="14" cy="18" rx="7" ry="8" fill="#f8ece4"/><path d="M22 18l8-2v14h-8z" fill="#b02020"/><path d="M8 22l6 2" stroke="#a08070" stroke-width="1"/></g></svg>
<div class="t" style="left:2233px;top:727.6px;font-size:11px;color:#111;">牛蕊</div>
<div class="t" style="left:2233px;top:744.1px;font-size:11px;color:#8c8fa0;">(访客)</div>
<svg class="a" style="left:2489px;top:732px;" width="15" height="18" viewBox="0 0 15 18"><g fill="#8f939e"><rect x="4.5" y="1" width="6" height="10" rx="3"/><path d="M2 8c0 3 2.5 5 5.5 5s5.5-2 5.5-5" fill="none" stroke="#8f939e" stroke-width="1.2"/><rect x="6.9" y="13" width="1.2" height="3"/><rect x="4.5" y="15.5" width="6" height="1.2"/></g><path d="M1.5 15.5L13.5 2" stroke="#f0442c" stroke-width="1.3"/></svg>
<svg class="a" style="left:2512px;top:733px;" width="18" height="16" viewBox="0 0 18 16"><rect x="1" y="3" width="11" height="10" rx="1.5" fill="#8f939e"/><path d="M12 6.5l5-3v9l-5-3z" fill="#8f939e"/><path d="M1 14.5L15 1.5" stroke="#fff" stroke-width="2.6"/><path d="M1 14.5L15 1.5" stroke="#f0442c" stroke-width="1.3"/></svg>
<svg class="a" style="left:2195px;top:770px;overflow:hidden" width="30" height="30" viewBox="0 0 30 30"><clipPath id="av14"><circle cx="15" cy="15" r="15"/></clipPath><g clip-path="url(#av14)"><rect width="30" height="30" fill="#e8d0a8"/><circle cx="15" cy="12" r="6" fill="#a08060"/><path d="M2 20l8-6 5 4 5-4 8 6-6 2-7 6-7-6z" fill="#1a1a1a"/><path d="M0 26h30v4H0z" fill="#c0a080"/></g></svg>
<div class="t" style="left:2233px;top:771.6px;font-size:11px;color:#111;">山止川行</div>
<div class="t" style="left:2233px;top:788.1px;font-size:11px;color:#8c8fa0;">(访客)</div>
<svg class="a" style="left:2489px;top:776px;" width="15" height="18" viewBox="0 0 15 18"><g fill="#8f939e"><rect x="4.5" y="1" width="6" height="10" rx="3"/><path d="M2 8c0 3 2.5 5 5.5 5s5.5-2 5.5-5" fill="none" stroke="#8f939e" stroke-width="1.2"/><rect x="6.9" y="13" width="1.2" height="3"/><rect x="4.5" y="15.5" width="6" height="1.2"/></g><path d="M1.5 15.5L13.5 2" stroke="#f0442c" stroke-width="1.3"/></svg>
<svg class="a" style="left:2512px;top:777px;" width="18" height="16" viewBox="0 0 18 16"><rect x="1" y="3" width="11" height="10" rx="1.5" fill="#8f939e"/><path d="M12 6.5l5-3v9l-5-3z" fill="#8f939e"/><path d="M1 14.5L15 1.5" stroke="#fff" stroke-width="2.6"/><path d="M1 14.5L15 1.5" stroke="#f0442c" stroke-width="1.3"/></svg>
<svg class="a" style="left:2195px;top:814px;overflow:hidden" width="30" height="30" viewBox="0 0 30 30"><clipPath id="av15"><circle cx="15" cy="15" r="15"/></clipPath><g clip-path="url(#av15)"><rect width="30" height="30" fill="#8a8478"/><path d="M0 0h10v30H0z" fill="#d8d0c8"/><circle cx="17" cy="9" r="5" fill="#302820"/><path d="M8 30c0-10 4-16 10-16s10 6 10 16z" fill="#3a3a38"/><ellipse cx="12" cy="24" rx="5" ry="4" fill="#e8c0b8"/></g></svg>
<div class="t" style="left:2233px;top:815.6px;font-size:11px;color:#111;">涂乐</div>
<div class="t" style="left:2233px;top:832.1px;font-size:11px;color:#8c8fa0;">(访客)</div>
<svg class="a" style="left:2489px;top:820px;" width="15" height="18" viewBox="0 0 15 18"><g fill="#8f939e"><rect x="4.5" y="1" width="6" height="10" rx="3"/><path d="M2 8c0 3 2.5 5 5.5 5s5.5-2 5.5-5" fill="none" stroke="#8f939e" stroke-width="1.2"/><rect x="6.9" y="13" width="1.2" height="3"/><rect x="4.5" y="15.5" width="6" height="1.2"/></g><path d="M1.5 15.5L13.5 2" stroke="#f0442c" stroke-width="1.3"/></svg>
<svg class="a" style="left:2512px;top:821px;" width="18" height="16" viewBox="0 0 18 16"><rect x="1" y="3" width="11" height="10" rx="1.5" fill="#8f939e"/><path d="M12 6.5l5-3v9l-5-3z" fill="#8f939e"/><path d="M1 14.5L15 1.5" stroke="#fff" stroke-width="2.6"/><path d="M1 14.5L15 1.5" stroke="#f0442c" stroke-width="1.3"/></svg>
<svg class="a" style="left:2195px;top:858px;overflow:hidden" width="30" height="30" viewBox="0 0 30 30"><clipPath id="av16"><circle cx="15" cy="15" r="15"/></clipPath><g clip-path="url(#av16)"><rect width="30" height="30" fill="#dcdcea"/><path d="M7 30c0-9 3-14 8-14s8 5 8 14z" fill="#a09888"/><circle cx="15" cy="11" r="5" fill="#d8c0a8"/><path d="M10 9c0-5 10-5 10 0z" fill="#2a58a8"/></g></svg>
<div class="t" style="left:2233px;top:859.6px;font-size:11px;color:#111;">汪菲菲</div>
<div class="t" style="left:2233px;top:876.1px;font-size:11px;color:#8c8fa0;">(访客)</div>
<svg class="a" style="left:2489px;top:864px;" width="15" height="18" viewBox="0 0 15 18"><g fill="#8f939e"><rect x="4.5" y="1" width="6" height="10" rx="3"/><path d="M2 8c0 3 2.5 5 5.5 5s5.5-2 5.5-5" fill="none" stroke="#8f939e" stroke-width="1.2"/><rect x="6.9" y="13" width="1.2" height="3"/><rect x="4.5" y="15.5" width="6" height="1.2"/></g><path d="M1.5 15.5L13.5 2" stroke="#f0442c" stroke-width="1.3"/></svg>
<svg class="a" style="left:2512px;top:865px;" width="18" height="16" viewBox="0 0 18 16"><rect x="1" y="3" width="11" height="10" rx="1.5" fill="#8f939e"/><path d="M12 6.5l5-3v9l-5-3z" fill="#8f939e"/><path d="M1 14.5L15 1.5" stroke="#fff" stroke-width="2.6"/><path d="M1 14.5L15 1.5" stroke="#f0442c" stroke-width="1.3"/></svg>
<div class="a" style="left:2195px;top:902px;width:30px;height:30px;border-radius:50%;background:#4472c4"></div>
<div class="t" style="left:2195px;top:911.1px;width:30px;text-align:center;font-size:12px;color:#fff">星熠</div>
<div class="t" style="left:2233px;top:903.6px;font-size:11px;color:#111;">星熠~</div>
<div class="t" style="left:2233px;top:920.1px;font-size:11px;color:#8c8fa0;">(访客)</div>
<svg class="a" style="left:2489px;top:908px;" width="15" height="18" viewBox="0 0 15 18"><g fill="#8f939e"><rect x="4.5" y="1" width="6" height="10" rx="3"/><path d="M2 8c0 3 2.5 5 5.5 5s5.5-2 5.5-5" fill="none" stroke="#8f939e" stroke-width="1.2"/><rect x="6.9" y="13" width="1.2" height="3"/><rect x="4.5" y="15.5" width="6" height="1.2"/></g><path d="M1.5 15.5L13.5 2" stroke="#f0442c" stroke-width="1.3"/></svg>
<svg class="a" style="left:2512px;top:909px;" width="18" height="16" viewBox="0 0 18 16"><rect x="1" y="3" width="11" height="10" rx="1.5" fill="#8f939e"/><path d="M12 6.5l5-3v9l-5-3z" fill="#8f939e"/><path d="M1 14.5L15 1.5" stroke="#fff" stroke-width="2.6"/><path d="M1 14.5L15 1.5" stroke="#f0442c" stroke-width="1.3"/></svg>
<svg class="a" style="left:2195px;top:946px;overflow:hidden" width="30" height="30" viewBox="0 0 30 30"><clipPath id="av18"><circle cx="15" cy="15" r="15"/></clipPath><g clip-path="url(#av18)"><rect width="30" height="30" fill="#e8e0d0"/><path d="M0 4h30M0 9h30M0 14h30M0 19h30M0 24h30" stroke="#c8b8a0" stroke-width="2"/><ellipse cx="15" cy="17" rx="7" ry="5" fill="#d89050"/><ellipse cx="15" cy="18.5" rx="4" ry="3" fill="#fff"/><circle cx="12" cy="16" r="1" fill="#222"/><circle cx="18" cy="16" r="1" fill="#222"/></g></svg>
<div class="t" style="left:2233px;top:947.6px;font-size:11px;color:#111;">余王豪</div>
<div class="t" style="left:2233px;top:964.1px;font-size:11px;color:#8c8fa0;">(访客)</div>
<svg class="a" style="left:2489px;top:952px;" width="15" height="18" viewBox="0 0 15 18"><g fill="#8f939e"><rect x="4.5" y="1" width="6" height="10" rx="3"/><path d="M2 8c0 3 2.5 5 5.5 5s5.5-2 5.5-5" fill="none" stroke="#8f939e" stroke-width="1.2"/><rect x="6.9" y="13" width="1.2" height="3"/><rect x="4.5" y="15.5" width="6" height="1.2"/></g><path d="M1.5 15.5L13.5 2" stroke="#f0442c" stroke-width="1.3"/></svg>
<svg class="a" style="left:2512px;top:953px;" width="18" height="16" viewBox="0 0 18 16"><rect x="1" y="3" width="11" height="10" rx="1.5" fill="#8f939e"/><path d="M12 6.5l5-3v9l-5-3z" fill="#8f939e"/><path d="M1 14.5L15 1.5" stroke="#fff" stroke-width="2.6"/><path d="M1 14.5L15 1.5" stroke="#f0442c" stroke-width="1.3"/></svg>
<svg class="a" style="left:2195px;top:990px;overflow:hidden" width="30" height="30" viewBox="0 0 30 30"><clipPath id="av19"><circle cx="15" cy="15" r="15"/></clipPath><g clip-path="url(#av19)"><rect width="30" height="30" fill="#a89838"/><path d="M0 0h30v14H0z" fill="#d8c860"/><path d="M4 0v20M10 0v18M20 0v18M26 0v20" stroke="#6a6020" stroke-width="1"/><path d="M0 22h30v8H0z" fill="#806a20"/><path d="M12 20h8v3h-8z" fill="#40403a"/></g></svg>
<div class="t" style="left:2233px;top:991.6px;font-size:11px;color:#111;">张翔</div>
<div class="t" style="left:2233px;top:1008.1px;font-size:11px;color:#8c8fa0;">(访客)</div>
<svg class="a" style="left:2489px;top:996px;" width="15" height="18" viewBox="0 0 15 18"><g fill="#8f939e"><rect x="4.5" y="1" width="6" height="10" rx="3"/><path d="M2 8c0 3 2.5 5 5.5 5s5.5-2 5.5-5" fill="none" stroke="#8f939e" stroke-width="1.2"/><rect x="6.9" y="13" width="1.2" height="3"/><rect x="4.5" y="15.5" width="6" height="1.2"/></g><path d="M1.5 15.5L13.5 2" stroke="#f0442c" stroke-width="1.3"/></svg>
<svg class="a" style="left:2512px;top:997px;" width="18" height="16" viewBox="0 0 18 16"><rect x="1" y="3" width="11" height="10" rx="1.5" fill="#8f939e"/><path d="M12 6.5l5-3v9l-5-3z" fill="#8f939e"/><path d="M1 14.5L15 1.5" stroke="#fff" stroke-width="2.6"/><path d="M1 14.5L15 1.5" stroke="#f0442c" stroke-width="1.3"/></svg>
<svg class="a" style="left:2195px;top:1034px;overflow:hidden" width="30" height="30" viewBox="0 0 30 30"><clipPath id="av20"><circle cx="15" cy="15" r="15"/></clipPath><g clip-path="url(#av20)"><rect width="30" height="30" fill="#fff"/><circle cx="15" cy="15" r="13.5" fill="none" stroke="#1a2878" stroke-width="3"/><path d="M9 6l3 4M21 6l-3 4" stroke="#1a2878" stroke-width="1.5"/><circle cx="12" cy="14" r="1.2" fill="#1a2878"/><path d="M14 18c1 2 3 2 4 0M9 24c2-2 4 0 6-1s4 1 6 0" stroke="#1a2878" stroke-width="1.3" fill="none"/></g></svg>
<div class="t" style="left:2233px;top:1035.6px;font-size:11px;color:#111;">钟成琳220110900841</div>
<div class="t" style="left:2233px;top:1052.1px;font-size:11px;color:#8c8fa0;">(访客)</div>
<svg class="a" style="left:2489px;top:1040px;" width="15" height="18" viewBox="0 0 15 18"><g fill="#8f939e"><rect x="4.5" y="1" width="6" height="10" rx="3"/><path d="M2 8c0 3 2.5 5 5.5 5s5.5-2 5.5-5" fill="none" stroke="#8f939e" stroke-width="1.2"/><rect x="6.9" y="13" width="1.2" height="3"/><rect x="4.5" y="15.5" width="6" height="1.2"/></g><path d="M1.5 15.5L13.5 2" stroke="#f0442c" stroke-width="1.3"/></svg>
<svg class="a" style="left:2512px;top:1041px;" width="18" height="16" viewBox="0 0 18 16"><rect x="1" y="3" width="11" height="10" rx="1.5" fill="#8f939e"/><path d="M12 6.5l5-3v9l-5-3z" fill="#8f939e"/><path d="M1 14.5L15 1.5" stroke="#fff" stroke-width="2.6"/><path d="M1 14.5L15 1.5" stroke="#f0442c" stroke-width="1.3"/></svg>
<svg class="a" style="left:2195px;top:1078px;overflow:hidden" width="30" height="30" viewBox="0 0 30 30"><clipPath id="av21"><circle cx="15" cy="15" r="15"/></clipPath><g clip-path="url(#av21)"><rect width="30" height="30" fill="#c0a890"/><path d="M3 30V12C3 4 9 1 14 1s10 4 10 11v18h-4V14c0-3-2-6-6-6s-6 3-6 6v16z" fill="#201810"/><ellipse cx="14" cy="15" rx="6" ry="8" fill="#e8c8b0"/><rect x="18" y="6" width="8" height="12" rx="2" fill="#d8c070"/><path d="M0 26h30v4H0z" fill="#508050"/></g></svg>
<div class="t" style="left:2233px;top:1079.6px;font-size:11px;color:#111;">21人工智能1班李苗青210110900508</div>
<div class="t" style="left:2233px;top:1096.1px;font-size:11px;color:#8c8fa0;">(访客)</div>
<svg class="a" style="left:2513px;top:1084px;" width="15" height="18" viewBox="0 0 15 18"><g fill="#8f939e"><rect x="4.5" y="1" width="6" height="10" rx="3"/><path d="M2 8c0 3 2.5 5 5.5 5s5.5-2 5.5-5" fill="none" stroke="#8f939e" stroke-width="1.2"/><rect x="6.9" y="13" width="1.2" height="3"/><rect x="4.5" y="15.5" width="6" height="1.2"/></g><path d="M1.5 15.5L13.5 2" stroke="#f0442c" stroke-width="1.3"/></svg>
<svg class="a" style="left:2195px;top:1122px;overflow:hidden" width="30" height="30" viewBox="0 0 30 30"><clipPath id="av22"><circle cx="15" cy="15" r="15"/></clipPath><g clip-path="url(#av22)"><rect width="30" height="30" fill="#9a9a9a"/><path d="M2 30V14C2 5 8 1 15 1s13 4 13 13v16h-4V16c0-5-4-8-9-8s-9 3-9 8v14z" fill="#e0b030"/><ellipse cx="15" cy="18" rx="8" ry="8" fill="#c8c8c8"/><circle cx="12" cy="15" r="2.2" fill="#fff"/><circle cx="18" cy="15" r="2.2" fill="#fff"/><ellipse cx="15" cy="22" rx="4" ry="3" fill="#e8d0c0"/></g></svg>
<div class="t" style="left:2233px;top:1123.6px;font-size:11px;color:#111;">4141</div>
<div class="t" style="left:2233px;top:1140.1px;font-size:11px;color:#8c8fa0;">(访客)</div>
<svg class="a" style="left:2513px;top:1128px;" width="15" height="18" viewBox="0 0 15 18"><g fill="#8f939e"><rect x="4.5" y="1" width="6" height="10" rx="3"/><path d="M2 8c0 3 2.5 5 5.5 5s5.5-2 5.5-5" fill="none" stroke="#8f939e" stroke-width="1.2"/><rect x="6.9" y="13" width="1.2" height="3"/><rect x="4.5" y="15.5" width="6" height="1.2"/></g><path d="M1.5 15.5L13.5 2" stroke="#f0442c" stroke-width="1.3"/></svg>
<svg class="a" style="left:2195px;top:1166px;overflow:hidden" width="30" height="30" viewBox="0 0 30 30"><clipPath id="av23"><circle cx="15" cy="15" r="15"/></clipPath><g clip-path="url(#av23)"><rect width="30" height="30" fill="#4a6898"/><path d="M0 0h30v10H0z" fill="#7890b8"/><path d="M8 30c0-8 3-12 7-12s7 4 7 12z" fill="#6a8ab8"/><circle cx="15" cy="12" r="5" fill="#1a1820"/><ellipse cx="15" cy="14" rx="3.5" ry="4" fill="#e8d0c0"/><rect x="13" y="18" width="4" height="5" fill="#f0f0f0"/></g></svg>
<div class="t" style="left:2233px;top:1167.6px;font-size:11px;color:#111;">hi</div>
<div class="t" style="left:2233px;top:1184.1px;font-size:11px;color:#8c8fa0;">(访客)</div>
<svg class="a" style="left:2513px;top:1172px;" width="15" height="18" viewBox="0 0 15 18"><g fill="#8f939e"><rect x="4.5" y="1" width="6" height="10" rx="3"/><path d="M2 8c0 3 2.5 5 5.5 5s5.5-2 5.5-5" fill="none" stroke="#8f939e" stroke-width="1.2"/><rect x="6.9" y="13" width="1.2" height="3"/><rect x="4.5" y="15.5" width="6" height="1.2"/></g><path d="M1.5 15.5L13.5 2" stroke="#f0442c" stroke-width="1.3"/></svg>
<svg class="a" style="left:2195px;top:1210px;overflow:hidden" width="30" height="30" viewBox="0 0 30 30"><clipPath id="av24"><circle cx="15" cy="15" r="15"/></clipPath><g clip-path="url(#av24)"><rect width="30" height="30" fill="#bfe4a8"/><ellipse cx="15" cy="18" rx="10" ry="9" fill="#fff"/><path d="M6 12l2-7 5 5M24 12l-2-7-5 5" fill="#fff" stroke="#5aa8d8" stroke-width="1.2"/><path d="M8 10c3-2 11-2 14 0" stroke="#5aa8d8" stroke-width="2" fill="none"/><circle cx="11.5" cy="17" r="1" fill="#222"/><circle cx="18.5" cy="17" r="1" fill="#222"/><circle cx="13" cy="23" r="2" fill="#f0a040"/></g></svg>
<div class="t" style="left:2233px;top:1211.6px;font-size:11px;color:#111;">QQ</div>
<div class="t" style="left:2233px;top:1228.1px;font-size:11px;color:#8c8fa0;">(访客)</div>
<svg class="a" style="left:2513px;top:1216px;" width="15" height="18" viewBox="0 0 15 18"><g fill="#8f939e"><rect x="4.5" y="1" width="6" height="10" rx="3"/><path d="M2 8c0 3 2.5 5 5.5 5s5.5-2 5.5-5" fill="none" stroke="#8f939e" stroke-width="1.2"/><rect x="6.9" y="13" width="1.2" height="3"/><rect x="4.5" y="15.5" width="6" height="1.2"/></g><path d="M1.5 15.5L13.5 2" stroke="#f0442c" stroke-width="1.3"/></svg>
<svg class="a" style="left:2195px;top:1254px;overflow:hidden" width="30" height="30" viewBox="0 0 30 30"><clipPath id="av25"><circle cx="15" cy="15" r="15"/></clipPath><g clip-path="url(#av25)"><rect width="30" height="30" fill="#e8dce8"/><path d="M4 12c2-8 8-10 12-10s10 3 11 10z" fill="#302828"/><ellipse cx="15" cy="16" rx="7" ry="7" fill="#f8e8e0"/><rect x="8.5" y="14" width="5" height="3.5" rx="1.5" fill="none" stroke="#e04060" stroke-width="1"/><rect x="16.5" y="14" width="5" height="3.5" rx="1.5" fill="none" stroke="#e04060" stroke-width="1"/><path d="M2 26h26v4H2z" fill="#d8b040"/><path d="M2 20l4 8 -4 2z" fill="#b080c0"/></g></svg>
<div class="t" style="left:2233px;top:1255.6px;font-size:11px;color:#111;">yyy</div>
<div class="t" style="left:2233px;top:1272.1px;font-size:11px;color:#8c8fa0;">(访客)</div>
<svg class="a" style="left:2513px;top:1260px;" width="15" height="18" viewBox="0 0 15 18"><g fill="#8f939e"><rect x="4.5" y="1" width="6" height="10" rx="3"/><path d="M2 8c0 3 2.5 5 5.5 5s5.5-2 5.5-5" fill="none" stroke="#8f939e" stroke-width="1.2"/><rect x="6.9" y="13" width="1.2" height="3"/><rect x="4.5" y="15.5" width="6" height="1.2"/></g><path d="M1.5 15.5L13.5 2" stroke="#f0442c" stroke-width="1.3"/></svg>
<svg class="a" style="left:2195px;top:1298px;overflow:hidden" width="30" height="30" viewBox="0 0 30 30"><clipPath id="av26"><circle cx="15" cy="15" r="15"/></clipPath><g clip-path="url(#av26)"><rect width="30" height="30" fill="#c8e4f4"/><path d="M4 8c6-4 16-4 22 2" stroke="#6ab0e0" stroke-width="1.4" fill="none"/><path d="M3 18c5-6 18-8 24-2" stroke="#4a98d0" stroke-width="1.6" fill="none"/><circle cx="11" cy="15" r="3" fill="#fff" stroke="#4a90c8" stroke-width="1"/><path d="M6 24c6 2 14 2 20-1" stroke="#8ac8e8" stroke-width="2" fill="none"/></g></svg>
<div class="t" style="left:2233px;top:1299.6px;font-size:11px;color:#111;">丁焜吾</div>
<div class="t" style="left:2233px;top:1316.1px;font-size:11px;color:#8c8fa0;">(访客)</div>
<svg class="a" style="left:2513px;top:1304px;" width="15" height="18" viewBox="0 0 15 18"><g fill="#8f939e"><rect x="4.5" y="1" width="6" height="10" rx="3"/><path d="M2 8c0 3 2.5 5 5.5 5s5.5-2 5.5-5" fill="none" stroke="#8f939e" stroke-width="1.2"/><rect x="6.9" y="13" width="1.2" height="3"/><rect x="4.5" y="15.5" width="6" height="1.2"/></g><path d="M1.5 15.5L13.5 2" stroke="#f0442c" stroke-width="1.3"/></svg>
<div class="a" style="left:2186px;top:700px;width:1px;height:18px;background:#b0b0b0"></div>
<div class="a" style="left:2189px;top:700px;width:1px;height:18px;background:#b0b0b0"></div>
<div class="a" style="left:2285px;top:30px;width:242px;height:72px;background:#2c2f32"></div>
<div class="a" style="left:2285px;top:66px;width:242px;height:1px;background:#1c1e20"></div>
<div class="a" style="left:2296px;top:45.5px;width:14px;height:5px;background:#1f7ae0;border-radius:2.5px"></div>
<div class="a" style="left:2320px;top:40px;width:14px;height:15px;border:2px solid #e8e8e8;border-top-width:4px;border-radius:2.5px"></div>
<svg class="a" style="left:2344px;top:40px;" width="14" height="15" viewBox="0 0 14 15"><path d="M1 5a4 4 0 0 1 4-4h4a4 4 0 0 1 4 4v1H1z" fill="#e8e8e8"/><rect x="1" y="7.5" width="12" height="2.5" fill="#e8e8e8"/><rect x="1" y="11.5" width="12" height="3" rx="1" fill="#e8e8e8"/></svg>
<svg class="a" style="left:2501px;top:40px;" width="16" height="16" viewBox="0 0 16 16"><path d="M1 1.5h12M1 8h9M1 14.5h12" stroke="#e8e8e8" stroke-width="1.6"/><path d="M12 5l3.5 3-3.5 3z" fill="#e8e8e8"/></svg>
<svg class="a" style="left:2296px;top:76px;" width="15" height="18" viewBox="0 0 15 18"><g fill="#9a9ea6"><rect x="4.5" y="1" width="6" height="10" rx="3"/><path d="M2 8c0 3 2.5 5 5.5 5s5.5-2 5.5-5" fill="none" stroke="#9a9ea6" stroke-width="1.2"/><rect x="6.9" y="13" width="1.2" height="3"/><rect x="4.5" y="15.5" width="6" height="1.2"/></g><path d="M1.5 15.5L13.5 2" stroke="#f0442c" stroke-width="1.3"/></svg>
<div class="a" style="left:2320px;top:74px;width:1px;height:20px;background:#55595e"></div>
<div class="t" style="left:2329px;top:78.1px;font-size:12px;color:#f4f4f4;">正在讲话:&nbsp;&nbsp;郭树雨;</div>
<svg class="a" style="left:2486px;top:72px;" width="42" height="26" viewBox="0 0 42 26"><path d="M3 13l9-9 9 9-9 9z" fill="#4a4d50"/><path d="M17 13l9-9 9 9-9 9z" fill="#45484b"/><path d="M31 13l9-9 2 2v14l-2 2z" fill="#404346"/></svg>
<div class="a" style="left:0;top:124px;width:2183px;height:1168px;overflow:hidden;pointer-events:none">
<div class="t" style="left:108.4px;top:143.0px;font-size:19px;color:rgba(110,120,140,.13);transform:translate(-50%,-50%) rotate(-45deg)">g5rYQw 吴泽勇</div>
<div class="t" style="left:326.7px;top:143.0px;font-size:19px;color:rgba(110,120,140,.13);transform:translate(-50%,-50%) rotate(-45deg)">g5rYQw 吴泽勇</div>
<div class="t" style="left:545.0px;top:143.0px;font-size:19px;color:rgba(110,120,140,.13);transform:translate(-50%,-50%) rotate(-45deg)">g5rYQw 吴泽勇</div>
<div class="t" style="left:763.3px;top:143.0px;font-size:19px;color:rgba(110,120,140,.13);transform:translate(-50%,-50%) rotate(-45deg)">g5rYQw 吴泽勇</div>
<div class="t" style="left:981.6px;top:143.0px;font-size:19px;color:rgba(110,120,140,.13);transform:translate(-50%,-50%) rotate(-45deg)">g5rYQw 吴泽勇</div>
<div class="t" style="left:1199.9px;top:143.0px;font-size:19px;color:rgba(110,120,140,.13);transform:translate(-50%,-50%) rotate(-45deg)">g5rYQw 吴泽勇</div>
<div class="t" style="left:1418.2px;top:143.0px;font-size:19px;color:rgba(110,120,140,.13);transform:translate(-50%,-50%) rotate(-45deg)">g5rYQw 吴泽勇</div>
<div class="t" style="left:1636.5px;top:143.0px;font-size:19px;color:rgba(110,120,140,.13);transform:translate(-50%,-50%) rotate(-45deg)">g5rYQw 吴泽勇</div>
<div class="t" style="left:1854.8px;top:143.0px;font-size:19px;color:rgba(110,120,140,.13);transform:translate(-50%,-50%) rotate(-45deg)">g5rYQw 吴泽勇</div>
<div class="t" style="left:2073.1px;top:143.0px;font-size:19px;color:rgba(110,120,140,.13);transform:translate(-50%,-50%) rotate(-45deg)">g5rYQw 吴泽勇</div>
<div class="t" style="left:2291.4px;top:143.0px;font-size:19px;color:rgba(110,120,140,.13);transform:translate(-50%,-50%) rotate(-45deg)">g5rYQw 吴泽勇</div>
<div class="t" style="left:108.4px;top:362.0px;font-size:19px;color:rgba(110,120,140,.13);transform:translate(-50%,-50%) rotate(-45deg)">g5rYQw 吴泽勇</div>
<div class="t" style="left:326.7px;top:362.0px;font-size:19px;color:rgba(110,120,140,.13);transform:translate(-50%,-50%) rotate(-45deg)">g5rYQw 吴泽勇</div>
<div class="t" style="left:545.0px;top:362.0px;font-size:19px;color:rgba(110,120,140,.13);transform:translate(-50%,-50%) rotate(-45deg)">g5rYQw 吴泽勇</div>
<div class="t" style="left:763.3px;top:362.0px;font-size:19px;color:rgba(110,120,140,.13);transform:translate(-50%,-50%) rotate(-45deg)">g5rYQw 吴泽勇</div>
<div class="t" style="left:981.6px;top:362.0px;font-size:19px;color:rgba(110,120,140,.13);transform:translate(-50%,-50%) rotate(-45deg)">g5rYQw 吴泽勇</div>
<div class="t" style="left:1199.9px;top:362.0px;font-size:19px;color:rgba(110,120,140,.13);transform:translate(-50%,-50%) rotate(-45deg)">g5rYQw 吴泽勇</div>
<div class="t" style="left:1418.2px;top:362.0px;font-size:19px;color:rgba(110,120,140,.13);transform:translate(-50%,-50%) rotate(-45deg)">g5rYQw 吴泽勇</div>
<div class="t" style="left:1636.5px;top:362.0px;font-size:19px;color:rgba(110,120,140,.13);transform:translate(-50%,-50%) rotate(-45deg)">g5rYQw 吴泽勇</div>
<div class="t" style="left:1854.8px;top:362.0px;font-size:19px;color:rgba(110,120,140,.13);transform:translate(-50%,-50%) rotate(-45deg)">g5rYQw 吴泽勇</div>
<div class="t" style="left:2073.1px;top:362.0px;font-size:19px;color:rgba(110,120,140,.13);transform:translate(-50%,-50%) rotate(-45deg)">g5rYQw 吴泽勇</div>
<div class="t" style="left:2291.4px;top:362.0px;font-size:19px;color:rgba(110,120,140,.13);transform:translate(-50%,-50%) rotate(-45deg)">g5rYQw 吴泽勇</div>
<div class="t" style="left:108.4px;top:581.0px;font-size:19px;color:rgba(110,120,140,.13);transform:translate(-50%,-50%) rotate(-45deg)">g5rYQw 吴泽勇</div>
<div class="t" style="left:326.7px;top:581.0px;font-size:19px;color:rgba(110,120,140,.13);transform:translate(-50%,-50%) rotate(-45deg)">g5rYQw 吴泽勇</div>
<div class="t" style="left:545.0px;top:581.0px;font-size:19px;color:rgba(110,120,140,.13);transform:translate(-50%,-50%) rotate(-45deg)">g5rYQw 吴泽勇</div>
<div class="t" style="left:763.3px;top:581.0px;font-size:19px;color:rgba(110,120,140,.13);transform:translate(-50%,-50%) rotate(-45deg)">g5rYQw 吴泽勇</div>
<div class="t" style="left:981.6px;top:581.0px;font-size:19px;color:rgba(110,120,140,.13);transform:translate(-50%,-50%) rotate(-45deg)">g5rYQw 吴泽勇</div>
<div class="t" style="left:1199.9px;top:581.0px;font-size:19px;color:rgba(110,120,140,.13);transform:translate(-50%,-50%) rotate(-45deg)">g5rYQw 吴泽勇</div>
<div class="t" style="left:1418.2px;top:581.0px;font-size:19px;color:rgba(110,120,140,.13);transform:translate(-50%,-50%) rotate(-45deg)">g5rYQw 吴泽勇</div>
<div class="t" style="left:1636.5px;top:581.0px;font-size:19px;color:rgba(110,120,140,.13);transform:translate(-50%,-50%) rotate(-45deg)">g5rYQw 吴泽勇</div>
<div class="t" style="left:1854.8px;top:581.0px;font-size:19px;color:rgba(110,120,140,.13);transform:translate(-50%,-50%) rotate(-45deg)">g5rYQw 吴泽勇</div>
<div class="t" style="left:2073.1px;top:581.0px;font-size:19px;color:rgba(110,120,140,.13);transform:translate(-50%,-50%) rotate(-45deg)">g5rYQw 吴泽勇</div>
<div class="t" style="left:2291.4px;top:581.0px;font-size:19px;color:rgba(110,120,140,.13);transform:translate(-50%,-50%) rotate(-45deg)">g5rYQw 吴泽勇</div>
<div class="t" style="left:108.4px;top:800.0px;font-size:19px;color:rgba(110,120,140,.13);transform:translate(-50%,-50%) rotate(-45deg)">g5rYQw 吴泽勇</div>
<div class="t" style="left:326.7px;top:800.0px;font-size:19px;color:rgba(110,120,140,.13);transform:translate(-50%,-50%) rotate(-45deg)">g5rYQw 吴泽勇</div>
<div class="t" style="left:545.0px;top:800.0px;font-size:19px;color:rgba(110,120,140,.13);transform:translate(-50%,-50%) rotate(-45deg)">g5rYQw 吴泽勇</div>
<div class="t" style="left:763.3px;top:800.0px;font-size:19px;color:rgba(110,120,140,.13);transform:translate(-50%,-50%) rotate(-45deg)">g5rYQw 吴泽勇</div>
<div class="t" style="left:981.6px;top:800.0px;font-size:19px;color:rgba(110,120,140,.13);transform:translate(-50%,-50%) rotate(-45deg)">g5rYQw 吴泽勇</div>
<div class="t" style="left:1199.9px;top:800.0px;font-size:19px;color:rgba(110,120,140,.13);transform:translate(-50%,-50%) rotate(-45deg)">g5rYQw 吴泽勇</div>
<div class="t" style="left:1418.2px;top:800.0px;font-size:19px;color:rgba(110,120,140,.13);transform:translate(-50%,-50%) rotate(-45deg)">g5rYQw 吴泽勇</div>
<div class="t" style="left:1636.5px;top:800.0px;font-size:19px;color:rgba(110,120,140,.13);transform:translate(-50%,-50%) rotate(-45deg)">g5rYQw 吴泽勇</div>
<div class="t" style="left:1854.8px;top:800.0px;font-size:19px;color:rgba(110,120,140,.13);transform:translate(-50%,-50%) rotate(-45deg)">g5rYQw 吴泽勇</div>
<div class="t" style="left:2073.1px;top:800.0px;font-size:19px;color:rgba(110,120,140,.13);transform:translate(-50%,-50%) rotate(-45deg)">g5rYQw 吴泽勇</div>
<div class="t" style="left:2291.4px;top:800.0px;font-size:19px;color:rgba(110,120,140,.13);transform:translate(-50%,-50%) rotate(-45deg)">g5rYQw 吴泽勇</div>
<div class="t" style="left:108.4px;top:1019.0px;font-size:19px;color:rgba(110,120,140,.13);transform:translate(-50%,-50%) rotate(-45deg)">g5rYQw 吴泽勇</div>
<div class="t" style="left:326.7px;top:1019.0px;font-size:19px;color:rgba(110,120,140,.13);transform:translate(-50%,-50%) rotate(-45deg)">g5rYQw 吴泽勇</div>
<div class="t" style="left:545.0px;top:1019.0px;font-size:19px;color:rgba(110,120,140,.13);transform:translate(-50%,-50%) rotate(-45deg)">g5rYQw 吴泽勇</div>
<div class="t" style="left:763.3px;top:1019.0px;font-size:19px;color:rgba(110,120,140,.13);transform:translate(-50%,-50%) rotate(-45deg)">g5rYQw 吴泽勇</div>
<div class="t" style="left:981.6px;top:1019.0px;font-size:19px;color:rgba(110,120,140,.13);transform:translate(-50%,-50%) rotate(-45deg)">g5rYQw 吴泽勇</div>
<div class="t" style="left:1199.9px;top:1019.0px;font-size:19px;color:rgba(110,120,140,.13);transform:translate(-50%,-50%) rotate(-45deg)">g5rYQw 吴泽勇</div>
<div class="t" style="left:1418.2px;top:1019.0px;font-size:19px;color:rgba(110,120,140,.13);transform:translate(-50%,-50%) rotate(-45deg)">g5rYQw 吴泽勇</div>
<div class="t" style="left:1636.5px;top:1019.0px;font-size:19px;color:rgba(110,120,140,.13);transform:translate(-50%,-50%) rotate(-45deg)">g5rYQw 吴泽勇</div>
<div class="t" style="left:1854.8px;top:1019.0px;font-size:19px;color:rgba(110,120,140,.13);transform:translate(-50%,-50%) rotate(-45deg)">g5rYQw 吴泽勇</div>
<div class="t" style="left:2073.1px;top:1019.0px;font-size:19px;color:rgba(110,120,140,.13);transform:translate(-50%,-50%) rotate(-45deg)">g5rYQw 吴泽勇</div>
<div class="t" style="left:2291.4px;top:1019.0px;font-size:19px;color:rgba(110,120,140,.13);transform:translate(-50%,-50%) rotate(-45deg)">g5rYQw 吴泽勇</div>
<div class="t" style="left:108.4px;top:1238.0px;font-size:19px;color:rgba(110,120,140,.13);transform:translate(-50%,-50%) rotate(-45deg)">g5rYQw 吴泽勇</div>
<div class="t" style="left:326.7px;top:1238.0px;font-size:19px;color:rgba(110,120,140,.13);transform:translate(-50%,-50%) rotate(-45deg)">g5rYQw 吴泽勇</div>
<div class="t" style="left:545.0px;top:1238.0px;font-size:19px;color:rgba(110,120,140,.13);transform:translate(-50%,-50%) rotate(-45deg)">g5rYQw 吴泽勇</div>
<div class="t" style="left:763.3px;top:1238.0px;font-size:19px;color:rgba(110,120,140,.13);transform:translate(-50%,-50%) rotate(-45deg)">g5rYQw 吴泽勇</div>
<div class="t" style="left:981.6px;top:1238.0px;font-size:19px;color:rgba(110,120,140,.13);transform:translate(-50%,-50%) rotate(-45deg)">g5rYQw 吴泽勇</div>
<div class="t" style="left:1199.9px;top:1238.0px;font-size:19px;color:rgba(110,120,140,.13);transform:translate(-50%,-50%) rotate(-45deg)">g5rYQw 吴泽勇</div>
<div class="t" style="left:1418.2px;top:1238.0px;font-size:19px;color:rgba(110,120,140,.13);transform:translate(-50%,-50%) rotate(-45deg)">g5rYQw 吴泽勇</div>
<div class="t" style="left:1636.5px;top:1238.0px;font-size:19px;color:rgba(110,120,140,.13);transform:translate(-50%,-50%) rotate(-45deg)">g5rYQw 吴泽勇</div>
<div class="t" style="left:1854.8px;top:1238.0px;font-size:19px;color:rgba(110,120,140,.13);transform:translate(-50%,-50%) rotate(-45deg)">g5rYQw 吴泽勇</div>
<div class="t" style="left:2073.1px;top:1238.0px;font-size:19px;color:rgba(110,120,140,.13);transform:translate(-50%,-50%) rotate(-45deg)">g5rYQw 吴泽勇</div>
<div class="t" style="left:2291.4px;top:1238.0px;font-size:19px;color:rgba(110,120,140,.13);transform:translate(-50%,-50%) rotate(-45deg)">g5rYQw 吴泽勇</div>
</div>
</body></html>
